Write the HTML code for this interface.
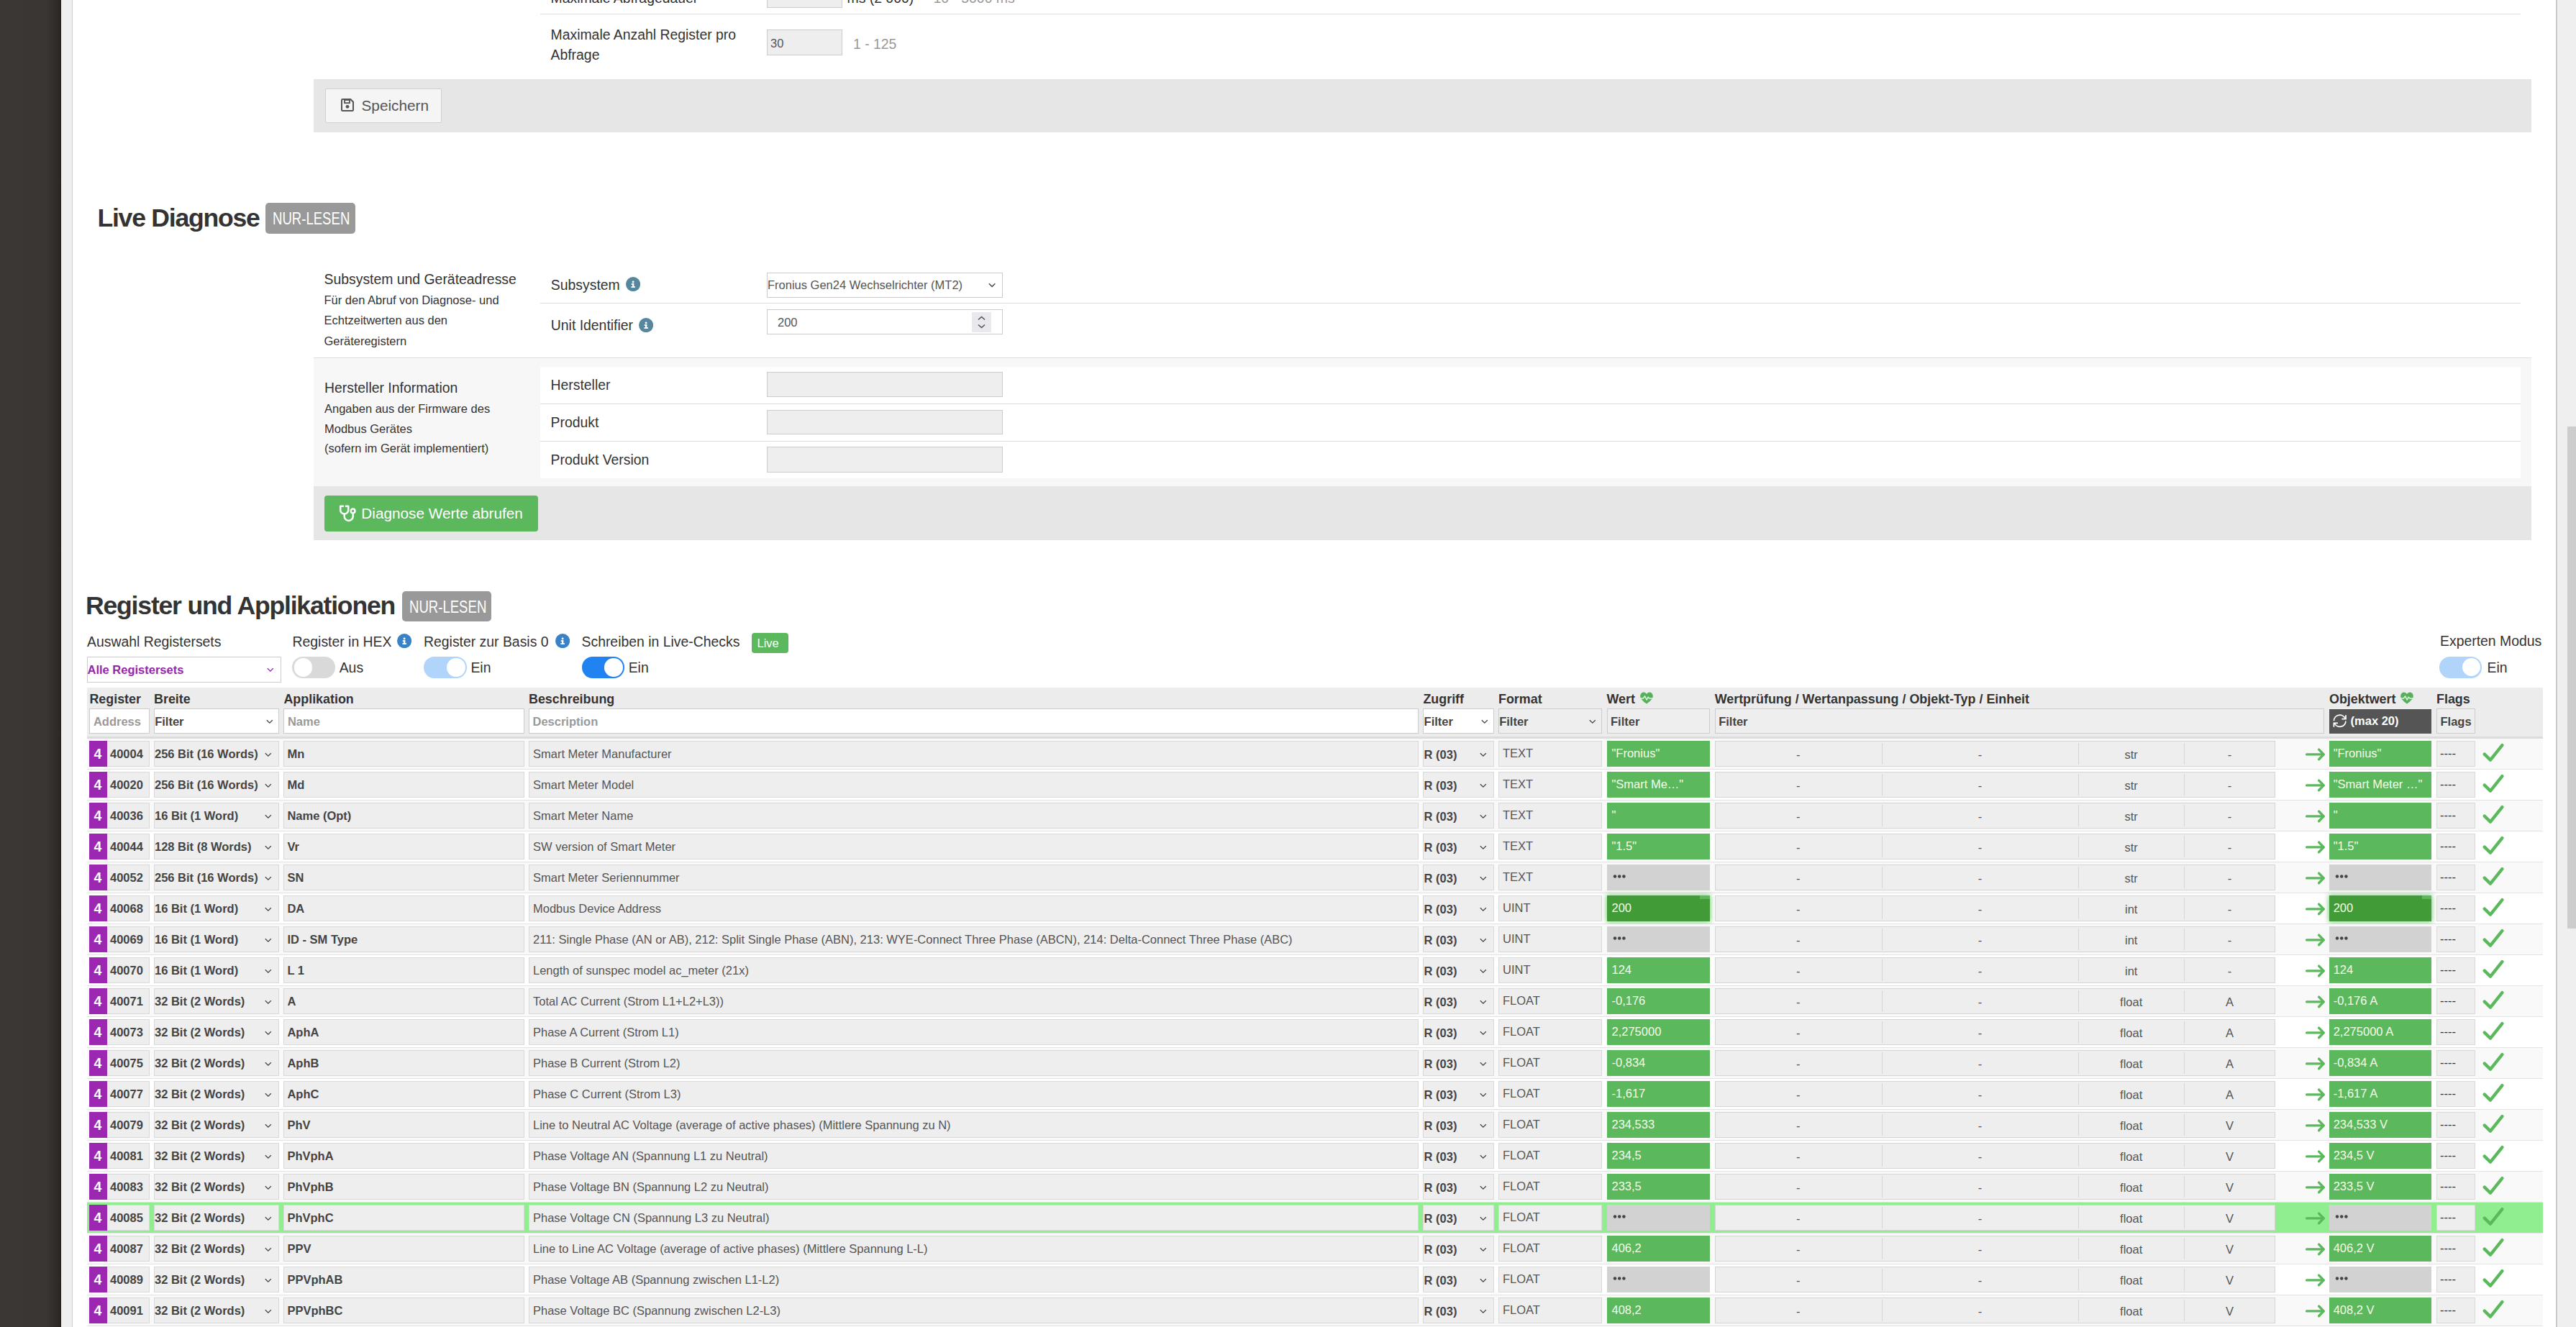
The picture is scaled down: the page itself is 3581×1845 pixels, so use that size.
<!DOCTYPE html><html><head><meta charset="utf-8"><style>html,body{margin:0;padding:0;}body{width:3581px;height:1845px;overflow:hidden;position:relative;background:#fff;font-family:"Liberation Sans",sans-serif;color:#333;}.a{position:absolute;box-sizing:border-box;}.t{white-space:nowrap;}</style></head><body>
<div class="a" style="left:0.00px;top:0.00px;width:85.00px;height:1845.00px;background:linear-gradient(to right,#3b3734 0,#3a3633 64px,#2c2825 83px,#221f1c 85px);"></div>
<div class="a" style="left:85.00px;top:0.00px;width:15.00px;height:1845.00px;background:#efefef;"></div>
<div class="a" style="left:99.50px;top:0.00px;width:1.50px;height:1845.00px;background:#cfcfcf;"></div>
<div class="a" style="left:3553.00px;top:0.00px;width:1.50px;height:1845.00px;background:#c9c9c9;"></div>
<div class="a" style="left:3554.50px;top:0.00px;width:26.50px;height:1845.00px;background:#efefef;"></div>
<div class="a" style="left:3569.00px;top:593.00px;width:12.00px;height:698.00px;background:#cdcdcd;"></div>
<div class="a t" style="left:765.50px;top:-12.42px;font-size:19.4px;line-height:19.4px;font-weight:normal;color:#333;">Maximale Abfragedauer</div>
<div class="a" style="left:1066.00px;top:-25.00px;width:105.00px;height:35.50px;background:#eee;border:1px solid #ccc;"></div>
<div class="a t" style="left:1177.50px;top:-12.42px;font-size:19.4px;line-height:19.4px;font-weight:normal;color:#333;">ms (2 000)</div>
<div class="a t" style="left:1297.50px;top:-12.42px;font-size:19.4px;line-height:19.4px;font-weight:normal;color:#999;">10 - 5000 ms</div>
<div class="a" style="left:751.00px;top:19.00px;width:2753.00px;height:1.30px;background:#ddd;"></div>
<div class="a t" style="left:765.50px;top:39.28px;font-size:19.4px;line-height:19.4px;font-weight:normal;color:#333;">Maximale Anzahl Register pro</div>
<div class="a t" style="left:765.50px;top:66.98px;font-size:19.4px;line-height:19.4px;font-weight:normal;color:#333;">Abfrage</div>
<div class="a" style="left:1066.00px;top:41.00px;width:105.00px;height:35.60px;background:#eee;border:1px solid #ccc;"></div>
<div class="a t" style="left:1071.00px;top:52.03px;font-size:16.5px;line-height:16.5px;font-weight:normal;color:#555;">30</div>
<div class="a t" style="left:1186.00px;top:52.08px;font-size:19.4px;line-height:19.4px;font-weight:normal;color:#999;">1 - 125</div>
<div class="a" style="left:436.00px;top:110.00px;width:3083.00px;height:74.00px;background:#e6e6e6;"></div>
<div class="a" style="left:451.70px;top:122.60px;width:162.70px;height:48.60px;background:#f5f5f5;border:1px solid #d0d0d0;border-radius:2px;"></div>
<svg class="a" style="left:473.80px;top:137.00px;" width="18" height="18" viewBox="0 0 18 18"><path d="M2.2 1 H13.3 L17 4.7 V15.8 Q17 17 15.8 17 H2.2 Q1 17 1 15.8 V2.2 Q1 1 2.2 1 Z" fill="none" stroke="#555" stroke-width="2"/><rect x="5" y="2" width="7" height="4.2" fill="none" stroke="#555" stroke-width="1.8"/><circle cx="9" cy="11.3" r="2.4" fill="#555"/></svg>
<div class="a t" style="left:502.50px;top:137.44px;font-size:20.75px;line-height:20.75px;font-weight:normal;color:#555;">Speichern</div>
<div class="a t" style="left:135.50px;top:286.06px;font-size:35.6px;line-height:35.6px;font-weight:bold;color:#333;letter-spacing:-1.25px;">Live Diagnose</div>
<div class="a" style="left:369.00px;top:282.00px;width:125.00px;height:42.70px;background:#999;border-radius:5px;"></div>
<div class="a t" style="left:379.00px;top:293.11px;font-size:23.5px;line-height:23.5px;font-weight:normal;color:#fff;transform:scaleX(0.79);transform-origin:0 0;">NUR-LESEN</div>
<div class="a t" style="left:450.50px;top:378.98px;font-size:19.4px;line-height:19.4px;font-weight:normal;color:#333;">Subsystem und Geräteadresse</div>
<div class="a t" style="left:450.50px;top:408.63px;font-size:16.5px;line-height:16.5px;font-weight:normal;color:#333;">Für den Abruf von Diagnose- und</div>
<div class="a t" style="left:450.50px;top:437.13px;font-size:16.5px;line-height:16.5px;font-weight:normal;color:#333;">Echtzeitwerten aus den</div>
<div class="a t" style="left:450.50px;top:465.63px;font-size:16.5px;line-height:16.5px;font-weight:normal;color:#333;">Geräteregistern</div>
<div class="a t" style="left:765.80px;top:386.58px;font-size:19.4px;line-height:19.4px;font-weight:normal;color:#333;">Subsystem</div>
<svg class="a" style="left:869.90px;top:385.20px;" width="20.2" height="20.2" viewBox="0 0 20.2 20.2"><circle cx="10.1" cy="10.1" r="10.1" fill="#55889f"/><circle cx="10.1" cy="7.0" r="1.45" fill="#fff"/><rect x="7.7" y="9.2" width="3.6" height="1.7" fill="#fff"/><rect x="9.0" y="9.2" width="2.3" height="5.6" fill="#fff"/><rect x="7.4" y="13.2" width="5.6" height="1.7" fill="#fff"/></svg>
<div class="a" style="left:1066.00px;top:378.50px;width:327.50px;height:35.00px;background:#fff;border:1px solid #ccc;"></div>
<div class="a t" style="left:1067.00px;top:388.13px;font-size:16.5px;line-height:16.5px;font-weight:normal;color:#555;">Fronius Gen24 Wechselrichter (MT2)</div>
<svg class="a" style="left:1373.90px;top:392.60px;" width="11.2" height="7.8" viewBox="0 0 11.2 7.8"><polyline points="0.85,1.275 5.1,5.525 9.35,1.275" fill="none" stroke="#444" stroke-width="1.36"/></svg>
<div class="a" style="left:751.00px;top:421.00px;width:2753.00px;height:1.30px;background:#ddd;"></div>
<div class="a t" style="left:765.80px;top:442.58px;font-size:19.4px;line-height:19.4px;font-weight:normal;color:#333;">Unit Identifier</div>
<svg class="a" style="left:888.30px;top:441.50px;" width="20.2" height="20.2" viewBox="0 0 20.2 20.2"><circle cx="10.1" cy="10.1" r="10.1" fill="#55889f"/><circle cx="10.1" cy="7.0" r="1.45" fill="#fff"/><rect x="7.7" y="9.2" width="3.6" height="1.7" fill="#fff"/><rect x="9.0" y="9.2" width="2.3" height="5.6" fill="#fff"/><rect x="7.4" y="13.2" width="5.6" height="1.7" fill="#fff"/></svg>
<div class="a" style="left:1066.00px;top:430.00px;width:327.50px;height:35.40px;background:#fff;border:1px solid #ccc;"></div>
<div class="a t" style="left:1081.00px;top:439.83px;font-size:16.5px;line-height:16.5px;font-weight:normal;color:#555;">200</div>
<div class="a" style="left:1351.00px;top:434.00px;width:27.00px;height:28.00px;background:#e9e9ed;"></div>
<svg class="a" style="left:1355.00px;top:437.00px;" width="19" height="22" viewBox="0 0 19 22"><polyline points="5,7.5 9.5,3.5 14,7.5" fill="none" stroke="#555" stroke-width="1.6"/><polyline points="5,14.5 9.5,18.5 14,14.5" fill="none" stroke="#555" stroke-width="1.6"/></svg>
<div class="a" style="left:436.00px;top:496.50px;width:3083.00px;height:1.30px;background:#ddd;"></div>
<div class="a" style="left:436.00px;top:497.80px;width:3083.00px;height:178.20px;background:#f7f7f7;"></div>
<div class="a" style="left:751.00px;top:510.00px;width:2753.00px;height:155.00px;background:#fff;"></div>
<div class="a t" style="left:451.00px;top:529.58px;font-size:19.4px;line-height:19.4px;font-weight:normal;color:#333;">Hersteller Information</div>
<div class="a t" style="left:451.00px;top:560.03px;font-size:16.5px;line-height:16.5px;font-weight:normal;color:#333;">Angaben aus der Firmware des</div>
<div class="a t" style="left:451.00px;top:587.83px;font-size:16.5px;line-height:16.5px;font-weight:normal;color:#333;">Modbus Gerätes</div>
<div class="a t" style="left:451.00px;top:615.03px;font-size:16.5px;line-height:16.5px;font-weight:normal;color:#333;">(sofern im Gerät implementiert)</div>
<div class="a t" style="left:765.50px;top:526.18px;font-size:19.4px;line-height:19.4px;font-weight:normal;color:#333;">Hersteller</div>
<div class="a t" style="left:765.50px;top:577.58px;font-size:19.4px;line-height:19.4px;font-weight:normal;color:#333;">Produkt</div>
<div class="a t" style="left:765.50px;top:629.58px;font-size:19.4px;line-height:19.4px;font-weight:normal;color:#333;">Produkt Version</div>
<div class="a" style="left:1066.00px;top:517.00px;width:327.60px;height:35.00px;background:#eee;border:1px solid #ccc;"></div>
<div class="a" style="left:1066.00px;top:569.60px;width:327.60px;height:34.90px;background:#eee;border:1px solid #ccc;"></div>
<div class="a" style="left:1066.00px;top:621.00px;width:327.60px;height:36.00px;background:#eee;border:1px solid #ccc;"></div>
<div class="a" style="left:751.00px;top:561.00px;width:2753.00px;height:1.20px;background:#ddd;"></div>
<div class="a" style="left:751.00px;top:613.00px;width:2753.00px;height:1.20px;background:#ddd;"></div>
<div class="a" style="left:436.00px;top:676.00px;width:3083.00px;height:75.00px;background:#e6e6e6;"></div>
<div class="a" style="left:451.20px;top:689.20px;width:296.60px;height:49.60px;background:#5cb85c;border-radius:4px;"></div>
<svg class="a" style="left:465.00px;top:697.00px;" width="35" height="33" viewBox="0 0 35 33"><path d="M11.9 6.7 H8.2 V12 A5.5 5.5 0 0 0 19.2 12 V6.7 H15.9" fill="none" stroke="#fff" stroke-width="2.5" stroke-linejoin="round" stroke-linecap="round"/><path d="M13.7 17.5 V21 A6 6 0 0 0 25.7 21 V16.3" fill="none" stroke="#fff" stroke-width="2.5"/><circle cx="25.6" cy="13.4" r="2.9" fill="none" stroke="#fff" stroke-width="2.4"/></svg>
<div class="a t" style="left:502.30px;top:704.44px;font-size:20.75px;line-height:20.75px;font-weight:normal;color:#fff;">Diagnose Werte abrufen</div>
<div class="a t" style="left:119.00px;top:825.36px;font-size:35.6px;line-height:35.6px;font-weight:bold;color:#333;letter-spacing:-1.2px;">Register und Applikationen</div>
<div class="a" style="left:558.60px;top:822.40px;width:124.40px;height:42.00px;background:#999;border-radius:5px;"></div>
<div class="a t" style="left:568.50px;top:833.11px;font-size:23.5px;line-height:23.5px;font-weight:normal;color:#fff;transform:scaleX(0.79);transform-origin:0 0;">NUR-LESEN</div>
<div class="a t" style="left:121.00px;top:882.58px;font-size:19.4px;line-height:19.4px;font-weight:normal;color:#333;">Auswahl Registersets</div>
<div class="a" style="left:121.00px;top:913.00px;width:269.70px;height:35.80px;background:#fff;border:1px solid #ccc;"></div>
<div class="a t" style="left:121.50px;top:923.03px;font-size:16.5px;line-height:16.5px;font-weight:bold;color:#9327ad;">Alle Registersets</div>
<svg class="a" style="left:371.20px;top:927.80px;" width="10.600000000000001" height="7.4" viewBox="0 0 10.600000000000001 7.4"><polyline points="0.8,1.2000000000000002 4.800000000000001,5.2 8.8,1.2000000000000002" fill="none" stroke="#9327ad" stroke-width="1.2800000000000002"/></svg>
<div class="a t" style="left:406.50px;top:882.58px;font-size:19.4px;line-height:19.4px;font-weight:normal;color:#333;">Register in HEX</div>
<svg class="a" style="left:552.10px;top:881.30px;" width="20.2" height="20.2" viewBox="0 0 20.2 20.2"><circle cx="10.1" cy="10.1" r="10.1" fill="#3a82c8"/><circle cx="10.1" cy="7.0" r="1.45" fill="#fff"/><rect x="7.7" y="9.2" width="3.6" height="1.7" fill="#fff"/><rect x="9.0" y="9.2" width="2.3" height="5.6" fill="#fff"/><rect x="7.4" y="13.2" width="5.6" height="1.7" fill="#fff"/></svg>
<div class="a" style="left:406.30px;top:913.00px;width:59.50px;height:29.80px;background:#d9d9d9;border-radius:14.899999999999977px;"></div>
<div class="a" style="left:408.50px;top:915.20px;width:25.40px;height:25.40px;background:#fff;border-radius:50%;"></div>
<div class="a t" style="left:471.70px;top:918.98px;font-size:19.4px;line-height:19.4px;font-weight:normal;color:#333;">Aus</div>
<div class="a t" style="left:589.00px;top:882.58px;font-size:19.4px;line-height:19.4px;font-weight:normal;color:#333;">Register zur Basis 0</div>
<svg class="a" style="left:771.50px;top:881.30px;" width="20.2" height="20.2" viewBox="0 0 20.2 20.2"><circle cx="10.1" cy="10.1" r="10.1" fill="#3a82c8"/><circle cx="10.1" cy="7.0" r="1.45" fill="#fff"/><rect x="7.7" y="9.2" width="3.6" height="1.7" fill="#fff"/><rect x="9.0" y="9.2" width="2.3" height="5.6" fill="#fff"/><rect x="7.4" y="13.2" width="5.6" height="1.7" fill="#fff"/></svg>
<div class="a" style="left:589.10px;top:913.00px;width:59.80px;height:29.80px;background:#b1d4fb;border-radius:14.899999999999977px;"></div>
<div class="a" style="left:621.30px;top:915.20px;width:25.40px;height:25.40px;background:#fff;border-radius:50%;"></div>
<div class="a t" style="left:654.40px;top:918.98px;font-size:19.4px;line-height:19.4px;font-weight:normal;color:#333;">Ein</div>
<div class="a t" style="left:808.50px;top:882.58px;font-size:19.4px;line-height:19.4px;font-weight:normal;color:#333;">Schreiben in Live-Checks</div>
<div class="a" style="left:1045.00px;top:880.00px;width:51.00px;height:28.00px;background:#5cb85c;border-radius:4px;"></div>
<div class="a t" style="left:1052.50px;top:886.03px;font-size:16.5px;line-height:16.5px;font-weight:normal;color:#fff;">Live</div>
<div class="a" style="left:808.50px;top:913.00px;width:59.50px;height:29.80px;background:#2183f2;border-radius:14.899999999999977px;"></div>
<div class="a" style="left:840.40px;top:915.20px;width:25.40px;height:25.40px;background:#fff;border-radius:50%;"></div>
<div class="a t" style="left:873.70px;top:918.98px;font-size:19.4px;line-height:19.4px;font-weight:normal;color:#333;">Ein</div>
<div class="a t" style="left:3392.00px;top:882.48px;font-size:19.4px;line-height:19.4px;font-weight:normal;color:#333;">Experten Modus</div>
<div class="a" style="left:3391.00px;top:913.00px;width:59.30px;height:29.60px;background:#b1d4fb;border-radius:14.800000000000011px;"></div>
<div class="a" style="left:3422.90px;top:915.20px;width:25.20px;height:25.20px;background:#fff;border-radius:50%;"></div>
<div class="a t" style="left:3457.50px;top:918.98px;font-size:19.4px;line-height:19.4px;font-weight:normal;color:#333;">Ein</div>
<div class="a" style="left:121.40px;top:956.00px;width:3413.60px;height:68.00px;background:#ececec;"></div>
<div class="a" style="left:121.40px;top:1024.00px;width:3413.60px;height:2.60px;background:#dcdcdc;"></div>
<div class="a t" style="left:124.40px;top:963.75px;font-size:17.9px;line-height:17.9px;font-weight:bold;color:#333;">Register</div>
<div class="a t" style="left:214.00px;top:963.75px;font-size:17.9px;line-height:17.9px;font-weight:bold;color:#333;">Breite</div>
<div class="a t" style="left:394.40px;top:963.75px;font-size:17.9px;line-height:17.9px;font-weight:bold;color:#333;">Applikation</div>
<div class="a t" style="left:735.00px;top:963.75px;font-size:17.9px;line-height:17.9px;font-weight:bold;color:#333;">Beschreibung</div>
<div class="a t" style="left:1978.40px;top:963.75px;font-size:17.9px;line-height:17.9px;font-weight:bold;color:#333;">Zugriff</div>
<div class="a t" style="left:2083.00px;top:963.75px;font-size:17.9px;line-height:17.9px;font-weight:bold;color:#333;">Format</div>
<div class="a t" style="left:2233.50px;top:963.75px;font-size:17.9px;line-height:17.9px;font-weight:bold;color:#333;">Wert</div>
<div class="a t" style="left:2383.70px;top:963.75px;font-size:17.9px;line-height:17.9px;font-weight:bold;color:#333;">Wertprüfung / Wertanpassung / Objekt-Typ / Einheit</div>
<div class="a t" style="left:3238.00px;top:963.75px;font-size:17.9px;line-height:17.9px;font-weight:bold;color:#333;">Objektwert</div>
<div class="a t" style="left:3387.00px;top:963.75px;font-size:17.9px;line-height:17.9px;font-weight:bold;color:#333;">Flags</div>
<svg class="a" style="left:2279.00px;top:962.40px;" width="20" height="17.5" viewBox="0 0 20 17.5"><g transform="translate(1,0.5)"><path d="M9 15.9 C8.2 15.9 1.8 10.5 0.7 8 C-0.9 4.4 1.4 0.1 4.8 0.1 C6.6 0.1 8.1 1.1 9 2.4 C9.9 1.1 11.4 0.1 13.2 0.1 C16.6 0.1 18.9 4.4 17.3 8 C16.2 10.5 9.8 15.9 9 15.9 Z" fill="#58b05c"/><polyline points="-0.6,8.4 4.5,8.4 6.5,5.3 9.2,10.6 11.2,6.7 12.9,8.6 18.6,8.6" fill="none" stroke="#d8f6d8" stroke-width="1.5" stroke-linejoin="round"/></g></svg>
<svg class="a" style="left:3336.10px;top:962.40px;" width="20" height="17.5" viewBox="0 0 20 17.5"><g transform="translate(1,0.5)"><path d="M9 15.9 C8.2 15.9 1.8 10.5 0.7 8 C-0.9 4.4 1.4 0.1 4.8 0.1 C6.6 0.1 8.1 1.1 9 2.4 C9.9 1.1 11.4 0.1 13.2 0.1 C16.6 0.1 18.9 4.4 17.3 8 C16.2 10.5 9.8 15.9 9 15.9 Z" fill="#58b05c"/><polyline points="-0.6,8.4 4.5,8.4 6.5,5.3 9.2,10.6 11.2,6.7 12.9,8.6 18.6,8.6" fill="none" stroke="#d8f6d8" stroke-width="1.5" stroke-linejoin="round"/></g></svg>
<div class="a" style="left:124.40px;top:985.30px;width:83.30px;height:35.20px;background:#fff;border:1px solid #ccc;"></div>
<div class="a t" style="left:129.90px;top:994.73px;font-size:16.5px;line-height:16.5px;font-weight:bold;color:#999;">Address</div>
<div class="a" style="left:214.00px;top:985.30px;width:173.60px;height:35.20px;background:#fff;border:1px solid #ccc;"></div>
<div class="a t" style="left:215.20px;top:994.73px;font-size:16.5px;line-height:16.5px;font-weight:bold;color:#444;">Filter</div>
<svg class="a" style="left:369.80px;top:1000.20px;" width="10.600000000000001" height="7.4" viewBox="0 0 10.600000000000001 7.4"><polyline points="0.8,1.2000000000000002 4.800000000000001,5.2 8.8,1.2000000000000002" fill="none" stroke="#444" stroke-width="1.2800000000000002"/></svg>
<div class="a" style="left:394.40px;top:985.30px;width:334.30px;height:35.20px;background:#fff;border:1px solid #ccc;"></div>
<div class="a t" style="left:399.90px;top:994.73px;font-size:16.5px;line-height:16.5px;font-weight:bold;color:#999;">Name</div>
<div class="a" style="left:735.00px;top:985.30px;width:1236.50px;height:35.20px;background:#fff;border:1px solid #ccc;"></div>
<div class="a t" style="left:740.50px;top:994.73px;font-size:16.5px;line-height:16.5px;font-weight:bold;color:#999;">Description</div>
<div class="a" style="left:1978.40px;top:985.30px;width:98.20px;height:35.20px;background:#fff;border:1px solid #ccc;"></div>
<div class="a t" style="left:1979.60px;top:994.73px;font-size:16.5px;line-height:16.5px;font-weight:bold;color:#444;">Filter</div>
<svg class="a" style="left:2058.80px;top:1000.20px;" width="10.600000000000001" height="7.4" viewBox="0 0 10.600000000000001 7.4"><polyline points="0.8,1.2000000000000002 4.800000000000001,5.2 8.8,1.2000000000000002" fill="none" stroke="#444" stroke-width="1.2800000000000002"/></svg>
<div class="a" style="left:2083.00px;top:985.30px;width:143.60px;height:35.20px;background:#eee;border:1px solid #ccc;"></div>
<div class="a t" style="left:2084.20px;top:994.73px;font-size:16.5px;line-height:16.5px;font-weight:bold;color:#444;">Filter</div>
<svg class="a" style="left:2208.80px;top:1000.20px;" width="10.600000000000001" height="7.4" viewBox="0 0 10.600000000000001 7.4"><polyline points="0.8,1.2000000000000002 4.800000000000001,5.2 8.8,1.2000000000000002" fill="none" stroke="#444" stroke-width="1.2800000000000002"/></svg>
<div class="a" style="left:2233.50px;top:985.30px;width:143.00px;height:35.20px;background:#eee;border:1px solid #ccc;"></div>
<div class="a t" style="left:2239.00px;top:994.73px;font-size:16.5px;line-height:16.5px;font-weight:bold;color:#444;">Filter</div>
<div class="a" style="left:2383.70px;top:985.30px;width:847.30px;height:35.20px;background:#eee;border:1px solid #ccc;"></div>
<div class="a t" style="left:2389.20px;top:994.73px;font-size:16.5px;line-height:16.5px;font-weight:bold;color:#444;">Filter</div>
<div class="a" style="left:3238.00px;top:986.00px;width:142.00px;height:33.80px;background:#555;"></div>
<svg class="a" style="left:3238.00px;top:988.50px;" width="30" height="30" viewBox="0 0 30 30"><path d="M6.4 13.3 A8.3 8.3 0 0 1 22.3 10.2" fill="none" stroke="#fff" stroke-width="1.75"/><path d="M23 5.2 V10.6 H17.4" fill="none" stroke="#fff" stroke-width="1.75"/><path d="M23 13.6 A8.3 8.3 0 0 1 7.2 16.6" fill="none" stroke="#fff" stroke-width="1.75"/><path d="M6.4 21.8 V16.4 H12" fill="none" stroke="#fff" stroke-width="1.75"/></svg>
<div class="a t" style="left:3267.60px;top:993.83px;font-size:16.5px;line-height:16.5px;font-weight:bold;color:#fff;">(max 20)</div>
<div class="a" style="left:3387.00px;top:985.30px;width:53.60px;height:35.20px;background:#eee;border:1px solid #ccc;"></div>
<div class="a t" style="left:3392.50px;top:994.73px;font-size:16.5px;line-height:16.5px;font-weight:bold;color:#444;">Flags</div>
<div class="a" style="left:121.40px;top:1026.60px;width:3413.60px;height:42.00px;background:#f9f9f9;"></div>
<div class="a" style="left:121.40px;top:1068.60px;width:3413.60px;height:1.00px;background:#e3e3e3;"></div>
<div class="a" style="left:124.40px;top:1030.20px;width:83.30px;height:35.60px;background:#eee;border:1px solid #d9d9d9;"></div>
<div class="a" style="left:214.00px;top:1030.20px;width:173.60px;height:35.60px;background:#eee;border:1px solid #d9d9d9;"></div>
<div class="a" style="left:394.40px;top:1030.20px;width:334.30px;height:35.60px;background:#eee;border:1px solid #d9d9d9;"></div>
<div class="a" style="left:735.00px;top:1030.20px;width:1236.50px;height:35.60px;background:#eee;border:1px solid #d9d9d9;"></div>
<div class="a" style="left:1978.40px;top:1030.20px;width:98.20px;height:35.60px;background:#eee;border:1px solid #d9d9d9;"></div>
<div class="a" style="left:2083.00px;top:1030.20px;width:143.60px;height:35.60px;background:#eee;border:1px solid #d9d9d9;"></div>
<div class="a" style="left:124.40px;top:1030.20px;width:24.20px;height:35.60px;background:#9c27b0;"></div>
<div class="a t" style="left:130.40px;top:1038.68px;font-size:19.4px;line-height:19.4px;font-weight:bold;color:#fff;">4</div>
<div class="a t" style="left:153.00px;top:1040.13px;font-size:16.5px;line-height:16.5px;font-weight:bold;color:#444;">40004</div>
<div class="a t" style="left:215.00px;top:1040.13px;font-size:16.5px;line-height:16.5px;font-weight:bold;color:#444;">256 Bit (16 Words)</div>
<svg class="a" style="left:368.20px;top:1045.50px;" width="10.600000000000001" height="7.4" viewBox="0 0 10.600000000000001 7.4"><polyline points="0.8,1.2000000000000002 4.800000000000001,5.2 8.8,1.2000000000000002" fill="none" stroke="#444" stroke-width="1.2800000000000002"/></svg>
<div class="a t" style="left:399.40px;top:1040.13px;font-size:16.5px;line-height:16.5px;font-weight:bold;color:#444;">Mn</div>
<div class="a t" style="left:741.00px;top:1040.13px;font-size:16.5px;line-height:16.5px;font-weight:normal;color:#555;">Smart Meter Manufacturer</div>
<div class="a t" style="left:1979.60px;top:1041.13px;font-size:16.5px;line-height:16.5px;font-weight:bold;color:#444;">R (03)</div>
<svg class="a" style="left:2057.20px;top:1045.50px;" width="10.600000000000001" height="7.4" viewBox="0 0 10.600000000000001 7.4"><polyline points="0.8,1.2000000000000002 4.800000000000001,5.2 8.8,1.2000000000000002" fill="none" stroke="#444" stroke-width="1.2800000000000002"/></svg>
<div class="a t" style="left:2089.00px;top:1038.63px;font-size:16.5px;line-height:16.5px;font-weight:normal;color:#555;">TEXT</div>
<div class="a" style="left:2233.50px;top:1030.20px;width:143.00px;height:35.60px;background:#5cb85c;"></div>
<div class="a t" style="left:2240.50px;top:1039.13px;font-size:16.5px;line-height:16.5px;font-weight:normal;color:#f4fbe9;">&quot;Fronius&quot;</div>
<div class="a" style="left:2383.70px;top:1030.20px;width:778.90px;height:35.60px;background:#eee;border:1px solid #d4d4d4;"></div>
<div class="a" style="left:2616.00px;top:1033.20px;width:1.00px;height:29.60px;background:#d6d6d6;"></div>
<div class="a" style="left:2889.30px;top:1033.20px;width:1.00px;height:29.60px;background:#d6d6d6;"></div>
<div class="a" style="left:3036.20px;top:1033.20px;width:1.00px;height:29.60px;background:#d6d6d6;"></div>
<div class="a t" style="left:2439.80px;width:120px;text-align:center;top:1040.83px;font-size:16.5px;line-height:16.5px;color:#555;">-</div>
<div class="a t" style="left:2692.60px;width:120px;text-align:center;top:1040.83px;font-size:16.5px;line-height:16.5px;color:#555;">-</div>
<div class="a t" style="left:2902.70px;width:120px;text-align:center;top:1040.83px;font-size:16.5px;line-height:16.5px;color:#555;">str</div>
<div class="a t" style="left:3039.40px;width:120px;text-align:center;top:1040.83px;font-size:16.5px;line-height:16.5px;color:#555;">-</div>
<svg class="a" style="left:3203.00px;top:1039.20px;" width="34" height="20" viewBox="0 0 34 20"><line x1="3.6" y1="9.9" x2="27" y2="9.9" stroke="#5cb85c" stroke-width="3.4" stroke-linecap="round"/><polyline points="20.6,3.1 27.2,9.9 20.6,16.7" fill="none" stroke="#5cb85c" stroke-width="3.4" stroke-linecap="round" stroke-linejoin="round"/></svg>
<div class="a" style="left:3238.00px;top:1030.20px;width:142.00px;height:35.60px;background:#5cb85c;"></div>
<div class="a t" style="left:3243.70px;top:1039.13px;font-size:16.5px;line-height:16.5px;font-weight:normal;color:#f4fbe9;">&quot;Fronius&quot;</div>
<div class="a" style="left:3387.00px;top:1030.20px;width:53.60px;height:35.60px;background:#eee;border:1px solid #d9d9d9;"></div>
<div class="a t" style="left:3392.00px;top:1038.63px;font-size:16.5px;line-height:16.5px;font-weight:normal;color:#333;">----</div>
<svg class="a" style="left:3451.00px;top:1030.20px;" width="32" height="32" viewBox="0 0 32 32"><polyline points="2.8,18.6 11.0,26.6 27.4,6.2" fill="none" stroke="#5cb85c" stroke-width="4.4" stroke-linecap="round" stroke-linejoin="round"/></svg>
<div class="a" style="left:121.40px;top:1111.60px;width:3413.60px;height:1.00px;background:#e3e3e3;"></div>
<div class="a" style="left:124.40px;top:1073.20px;width:83.30px;height:35.60px;background:#eee;border:1px solid #d9d9d9;"></div>
<div class="a" style="left:214.00px;top:1073.20px;width:173.60px;height:35.60px;background:#eee;border:1px solid #d9d9d9;"></div>
<div class="a" style="left:394.40px;top:1073.20px;width:334.30px;height:35.60px;background:#eee;border:1px solid #d9d9d9;"></div>
<div class="a" style="left:735.00px;top:1073.20px;width:1236.50px;height:35.60px;background:#eee;border:1px solid #d9d9d9;"></div>
<div class="a" style="left:1978.40px;top:1073.20px;width:98.20px;height:35.60px;background:#eee;border:1px solid #d9d9d9;"></div>
<div class="a" style="left:2083.00px;top:1073.20px;width:143.60px;height:35.60px;background:#eee;border:1px solid #d9d9d9;"></div>
<div class="a" style="left:124.40px;top:1073.20px;width:24.20px;height:35.60px;background:#9c27b0;"></div>
<div class="a t" style="left:130.40px;top:1081.68px;font-size:19.4px;line-height:19.4px;font-weight:bold;color:#fff;">4</div>
<div class="a t" style="left:153.00px;top:1083.13px;font-size:16.5px;line-height:16.5px;font-weight:bold;color:#444;">40020</div>
<div class="a t" style="left:215.00px;top:1083.13px;font-size:16.5px;line-height:16.5px;font-weight:bold;color:#444;">256 Bit (16 Words)</div>
<svg class="a" style="left:368.20px;top:1088.50px;" width="10.600000000000001" height="7.4" viewBox="0 0 10.600000000000001 7.4"><polyline points="0.8,1.2000000000000002 4.800000000000001,5.2 8.8,1.2000000000000002" fill="none" stroke="#444" stroke-width="1.2800000000000002"/></svg>
<div class="a t" style="left:399.40px;top:1083.13px;font-size:16.5px;line-height:16.5px;font-weight:bold;color:#444;">Md</div>
<div class="a t" style="left:741.00px;top:1083.13px;font-size:16.5px;line-height:16.5px;font-weight:normal;color:#555;">Smart Meter Model</div>
<div class="a t" style="left:1979.60px;top:1084.13px;font-size:16.5px;line-height:16.5px;font-weight:bold;color:#444;">R (03)</div>
<svg class="a" style="left:2057.20px;top:1088.50px;" width="10.600000000000001" height="7.4" viewBox="0 0 10.600000000000001 7.4"><polyline points="0.8,1.2000000000000002 4.800000000000001,5.2 8.8,1.2000000000000002" fill="none" stroke="#444" stroke-width="1.2800000000000002"/></svg>
<div class="a t" style="left:2089.00px;top:1081.63px;font-size:16.5px;line-height:16.5px;font-weight:normal;color:#555;">TEXT</div>
<div class="a" style="left:2233.50px;top:1073.20px;width:143.00px;height:35.60px;background:#5cb85c;"></div>
<div class="a t" style="left:2240.50px;top:1082.13px;font-size:16.5px;line-height:16.5px;font-weight:normal;color:#f4fbe9;">&quot;Smart Me…&quot;</div>
<div class="a" style="left:2383.70px;top:1073.20px;width:778.90px;height:35.60px;background:#eee;border:1px solid #d4d4d4;"></div>
<div class="a" style="left:2616.00px;top:1076.20px;width:1.00px;height:29.60px;background:#d6d6d6;"></div>
<div class="a" style="left:2889.30px;top:1076.20px;width:1.00px;height:29.60px;background:#d6d6d6;"></div>
<div class="a" style="left:3036.20px;top:1076.20px;width:1.00px;height:29.60px;background:#d6d6d6;"></div>
<div class="a t" style="left:2439.80px;width:120px;text-align:center;top:1083.83px;font-size:16.5px;line-height:16.5px;color:#555;">-</div>
<div class="a t" style="left:2692.60px;width:120px;text-align:center;top:1083.83px;font-size:16.5px;line-height:16.5px;color:#555;">-</div>
<div class="a t" style="left:2902.70px;width:120px;text-align:center;top:1083.83px;font-size:16.5px;line-height:16.5px;color:#555;">str</div>
<div class="a t" style="left:3039.40px;width:120px;text-align:center;top:1083.83px;font-size:16.5px;line-height:16.5px;color:#555;">-</div>
<svg class="a" style="left:3203.00px;top:1082.20px;" width="34" height="20" viewBox="0 0 34 20"><line x1="3.6" y1="9.9" x2="27" y2="9.9" stroke="#5cb85c" stroke-width="3.4" stroke-linecap="round"/><polyline points="20.6,3.1 27.2,9.9 20.6,16.7" fill="none" stroke="#5cb85c" stroke-width="3.4" stroke-linecap="round" stroke-linejoin="round"/></svg>
<div class="a" style="left:3238.00px;top:1073.20px;width:142.00px;height:35.60px;background:#5cb85c;"></div>
<div class="a t" style="left:3243.70px;top:1082.13px;font-size:16.5px;line-height:16.5px;font-weight:normal;color:#f4fbe9;">&quot;Smart Meter …&quot;</div>
<div class="a" style="left:3387.00px;top:1073.20px;width:53.60px;height:35.60px;background:#eee;border:1px solid #d9d9d9;"></div>
<div class="a t" style="left:3392.00px;top:1081.63px;font-size:16.5px;line-height:16.5px;font-weight:normal;color:#333;">----</div>
<svg class="a" style="left:3451.00px;top:1073.20px;" width="32" height="32" viewBox="0 0 32 32"><polyline points="2.8,18.6 11.0,26.6 27.4,6.2" fill="none" stroke="#5cb85c" stroke-width="4.4" stroke-linecap="round" stroke-linejoin="round"/></svg>
<div class="a" style="left:121.40px;top:1112.60px;width:3413.60px;height:42.00px;background:#f9f9f9;"></div>
<div class="a" style="left:121.40px;top:1154.60px;width:3413.60px;height:1.00px;background:#e3e3e3;"></div>
<div class="a" style="left:124.40px;top:1116.20px;width:83.30px;height:35.60px;background:#eee;border:1px solid #d9d9d9;"></div>
<div class="a" style="left:214.00px;top:1116.20px;width:173.60px;height:35.60px;background:#eee;border:1px solid #d9d9d9;"></div>
<div class="a" style="left:394.40px;top:1116.20px;width:334.30px;height:35.60px;background:#eee;border:1px solid #d9d9d9;"></div>
<div class="a" style="left:735.00px;top:1116.20px;width:1236.50px;height:35.60px;background:#eee;border:1px solid #d9d9d9;"></div>
<div class="a" style="left:1978.40px;top:1116.20px;width:98.20px;height:35.60px;background:#eee;border:1px solid #d9d9d9;"></div>
<div class="a" style="left:2083.00px;top:1116.20px;width:143.60px;height:35.60px;background:#eee;border:1px solid #d9d9d9;"></div>
<div class="a" style="left:124.40px;top:1116.20px;width:24.20px;height:35.60px;background:#9c27b0;"></div>
<div class="a t" style="left:130.40px;top:1124.68px;font-size:19.4px;line-height:19.4px;font-weight:bold;color:#fff;">4</div>
<div class="a t" style="left:153.00px;top:1126.13px;font-size:16.5px;line-height:16.5px;font-weight:bold;color:#444;">40036</div>
<div class="a t" style="left:215.00px;top:1126.13px;font-size:16.5px;line-height:16.5px;font-weight:bold;color:#444;">16 Bit (1 Word)</div>
<svg class="a" style="left:368.20px;top:1131.50px;" width="10.600000000000001" height="7.4" viewBox="0 0 10.600000000000001 7.4"><polyline points="0.8,1.2000000000000002 4.800000000000001,5.2 8.8,1.2000000000000002" fill="none" stroke="#444" stroke-width="1.2800000000000002"/></svg>
<div class="a t" style="left:399.40px;top:1126.13px;font-size:16.5px;line-height:16.5px;font-weight:bold;color:#444;">Name (Opt)</div>
<div class="a t" style="left:741.00px;top:1126.13px;font-size:16.5px;line-height:16.5px;font-weight:normal;color:#555;">Smart Meter Name</div>
<div class="a t" style="left:1979.60px;top:1127.13px;font-size:16.5px;line-height:16.5px;font-weight:bold;color:#444;">R (03)</div>
<svg class="a" style="left:2057.20px;top:1131.50px;" width="10.600000000000001" height="7.4" viewBox="0 0 10.600000000000001 7.4"><polyline points="0.8,1.2000000000000002 4.800000000000001,5.2 8.8,1.2000000000000002" fill="none" stroke="#444" stroke-width="1.2800000000000002"/></svg>
<div class="a t" style="left:2089.00px;top:1124.63px;font-size:16.5px;line-height:16.5px;font-weight:normal;color:#555;">TEXT</div>
<div class="a" style="left:2233.50px;top:1116.20px;width:143.00px;height:35.60px;background:#5cb85c;"></div>
<div class="a t" style="left:2240.50px;top:1125.13px;font-size:16.5px;line-height:16.5px;font-weight:normal;color:#f4fbe9;">&quot;</div>
<div class="a" style="left:2383.70px;top:1116.20px;width:778.90px;height:35.60px;background:#eee;border:1px solid #d4d4d4;"></div>
<div class="a" style="left:2616.00px;top:1119.20px;width:1.00px;height:29.60px;background:#d6d6d6;"></div>
<div class="a" style="left:2889.30px;top:1119.20px;width:1.00px;height:29.60px;background:#d6d6d6;"></div>
<div class="a" style="left:3036.20px;top:1119.20px;width:1.00px;height:29.60px;background:#d6d6d6;"></div>
<div class="a t" style="left:2439.80px;width:120px;text-align:center;top:1126.83px;font-size:16.5px;line-height:16.5px;color:#555;">-</div>
<div class="a t" style="left:2692.60px;width:120px;text-align:center;top:1126.83px;font-size:16.5px;line-height:16.5px;color:#555;">-</div>
<div class="a t" style="left:2902.70px;width:120px;text-align:center;top:1126.83px;font-size:16.5px;line-height:16.5px;color:#555;">str</div>
<div class="a t" style="left:3039.40px;width:120px;text-align:center;top:1126.83px;font-size:16.5px;line-height:16.5px;color:#555;">-</div>
<svg class="a" style="left:3203.00px;top:1125.20px;" width="34" height="20" viewBox="0 0 34 20"><line x1="3.6" y1="9.9" x2="27" y2="9.9" stroke="#5cb85c" stroke-width="3.4" stroke-linecap="round"/><polyline points="20.6,3.1 27.2,9.9 20.6,16.7" fill="none" stroke="#5cb85c" stroke-width="3.4" stroke-linecap="round" stroke-linejoin="round"/></svg>
<div class="a" style="left:3238.00px;top:1116.20px;width:142.00px;height:35.60px;background:#5cb85c;"></div>
<div class="a t" style="left:3243.70px;top:1125.13px;font-size:16.5px;line-height:16.5px;font-weight:normal;color:#f4fbe9;">&quot;</div>
<div class="a" style="left:3387.00px;top:1116.20px;width:53.60px;height:35.60px;background:#eee;border:1px solid #d9d9d9;"></div>
<div class="a t" style="left:3392.00px;top:1124.63px;font-size:16.5px;line-height:16.5px;font-weight:normal;color:#333;">----</div>
<svg class="a" style="left:3451.00px;top:1116.20px;" width="32" height="32" viewBox="0 0 32 32"><polyline points="2.8,18.6 11.0,26.6 27.4,6.2" fill="none" stroke="#5cb85c" stroke-width="4.4" stroke-linecap="round" stroke-linejoin="round"/></svg>
<div class="a" style="left:121.40px;top:1197.60px;width:3413.60px;height:1.00px;background:#e3e3e3;"></div>
<div class="a" style="left:124.40px;top:1159.20px;width:83.30px;height:35.60px;background:#eee;border:1px solid #d9d9d9;"></div>
<div class="a" style="left:214.00px;top:1159.20px;width:173.60px;height:35.60px;background:#eee;border:1px solid #d9d9d9;"></div>
<div class="a" style="left:394.40px;top:1159.20px;width:334.30px;height:35.60px;background:#eee;border:1px solid #d9d9d9;"></div>
<div class="a" style="left:735.00px;top:1159.20px;width:1236.50px;height:35.60px;background:#eee;border:1px solid #d9d9d9;"></div>
<div class="a" style="left:1978.40px;top:1159.20px;width:98.20px;height:35.60px;background:#eee;border:1px solid #d9d9d9;"></div>
<div class="a" style="left:2083.00px;top:1159.20px;width:143.60px;height:35.60px;background:#eee;border:1px solid #d9d9d9;"></div>
<div class="a" style="left:124.40px;top:1159.20px;width:24.20px;height:35.60px;background:#9c27b0;"></div>
<div class="a t" style="left:130.40px;top:1167.68px;font-size:19.4px;line-height:19.4px;font-weight:bold;color:#fff;">4</div>
<div class="a t" style="left:153.00px;top:1169.13px;font-size:16.5px;line-height:16.5px;font-weight:bold;color:#444;">40044</div>
<div class="a t" style="left:215.00px;top:1169.13px;font-size:16.5px;line-height:16.5px;font-weight:bold;color:#444;">128 Bit (8 Words)</div>
<svg class="a" style="left:368.20px;top:1174.50px;" width="10.600000000000001" height="7.4" viewBox="0 0 10.600000000000001 7.4"><polyline points="0.8,1.2000000000000002 4.800000000000001,5.2 8.8,1.2000000000000002" fill="none" stroke="#444" stroke-width="1.2800000000000002"/></svg>
<div class="a t" style="left:399.40px;top:1169.13px;font-size:16.5px;line-height:16.5px;font-weight:bold;color:#444;">Vr</div>
<div class="a t" style="left:741.00px;top:1169.13px;font-size:16.5px;line-height:16.5px;font-weight:normal;color:#555;">SW version of Smart Meter</div>
<div class="a t" style="left:1979.60px;top:1170.13px;font-size:16.5px;line-height:16.5px;font-weight:bold;color:#444;">R (03)</div>
<svg class="a" style="left:2057.20px;top:1174.50px;" width="10.600000000000001" height="7.4" viewBox="0 0 10.600000000000001 7.4"><polyline points="0.8,1.2000000000000002 4.800000000000001,5.2 8.8,1.2000000000000002" fill="none" stroke="#444" stroke-width="1.2800000000000002"/></svg>
<div class="a t" style="left:2089.00px;top:1167.63px;font-size:16.5px;line-height:16.5px;font-weight:normal;color:#555;">TEXT</div>
<div class="a" style="left:2233.50px;top:1159.20px;width:143.00px;height:35.60px;background:#5cb85c;"></div>
<div class="a t" style="left:2240.50px;top:1168.13px;font-size:16.5px;line-height:16.5px;font-weight:normal;color:#f4fbe9;">&quot;1.5&quot;</div>
<div class="a" style="left:2383.70px;top:1159.20px;width:778.90px;height:35.60px;background:#eee;border:1px solid #d4d4d4;"></div>
<div class="a" style="left:2616.00px;top:1162.20px;width:1.00px;height:29.60px;background:#d6d6d6;"></div>
<div class="a" style="left:2889.30px;top:1162.20px;width:1.00px;height:29.60px;background:#d6d6d6;"></div>
<div class="a" style="left:3036.20px;top:1162.20px;width:1.00px;height:29.60px;background:#d6d6d6;"></div>
<div class="a t" style="left:2439.80px;width:120px;text-align:center;top:1169.83px;font-size:16.5px;line-height:16.5px;color:#555;">-</div>
<div class="a t" style="left:2692.60px;width:120px;text-align:center;top:1169.83px;font-size:16.5px;line-height:16.5px;color:#555;">-</div>
<div class="a t" style="left:2902.70px;width:120px;text-align:center;top:1169.83px;font-size:16.5px;line-height:16.5px;color:#555;">str</div>
<div class="a t" style="left:3039.40px;width:120px;text-align:center;top:1169.83px;font-size:16.5px;line-height:16.5px;color:#555;">-</div>
<svg class="a" style="left:3203.00px;top:1168.20px;" width="34" height="20" viewBox="0 0 34 20"><line x1="3.6" y1="9.9" x2="27" y2="9.9" stroke="#5cb85c" stroke-width="3.4" stroke-linecap="round"/><polyline points="20.6,3.1 27.2,9.9 20.6,16.7" fill="none" stroke="#5cb85c" stroke-width="3.4" stroke-linecap="round" stroke-linejoin="round"/></svg>
<div class="a" style="left:3238.00px;top:1159.20px;width:142.00px;height:35.60px;background:#5cb85c;"></div>
<div class="a t" style="left:3243.70px;top:1168.13px;font-size:16.5px;line-height:16.5px;font-weight:normal;color:#f4fbe9;">&quot;1.5&quot;</div>
<div class="a" style="left:3387.00px;top:1159.20px;width:53.60px;height:35.60px;background:#eee;border:1px solid #d9d9d9;"></div>
<div class="a t" style="left:3392.00px;top:1167.63px;font-size:16.5px;line-height:16.5px;font-weight:normal;color:#333;">----</div>
<svg class="a" style="left:3451.00px;top:1159.20px;" width="32" height="32" viewBox="0 0 32 32"><polyline points="2.8,18.6 11.0,26.6 27.4,6.2" fill="none" stroke="#5cb85c" stroke-width="4.4" stroke-linecap="round" stroke-linejoin="round"/></svg>
<div class="a" style="left:121.40px;top:1198.60px;width:3413.60px;height:42.00px;background:#f9f9f9;"></div>
<div class="a" style="left:121.40px;top:1240.60px;width:3413.60px;height:1.00px;background:#e3e3e3;"></div>
<div class="a" style="left:124.40px;top:1202.20px;width:83.30px;height:35.60px;background:#eee;border:1px solid #d9d9d9;"></div>
<div class="a" style="left:214.00px;top:1202.20px;width:173.60px;height:35.60px;background:#eee;border:1px solid #d9d9d9;"></div>
<div class="a" style="left:394.40px;top:1202.20px;width:334.30px;height:35.60px;background:#eee;border:1px solid #d9d9d9;"></div>
<div class="a" style="left:735.00px;top:1202.20px;width:1236.50px;height:35.60px;background:#eee;border:1px solid #d9d9d9;"></div>
<div class="a" style="left:1978.40px;top:1202.20px;width:98.20px;height:35.60px;background:#eee;border:1px solid #d9d9d9;"></div>
<div class="a" style="left:2083.00px;top:1202.20px;width:143.60px;height:35.60px;background:#eee;border:1px solid #d9d9d9;"></div>
<div class="a" style="left:124.40px;top:1202.20px;width:24.20px;height:35.60px;background:#9c27b0;"></div>
<div class="a t" style="left:130.40px;top:1210.68px;font-size:19.4px;line-height:19.4px;font-weight:bold;color:#fff;">4</div>
<div class="a t" style="left:153.00px;top:1212.13px;font-size:16.5px;line-height:16.5px;font-weight:bold;color:#444;">40052</div>
<div class="a t" style="left:215.00px;top:1212.13px;font-size:16.5px;line-height:16.5px;font-weight:bold;color:#444;">256 Bit (16 Words)</div>
<svg class="a" style="left:368.20px;top:1217.50px;" width="10.600000000000001" height="7.4" viewBox="0 0 10.600000000000001 7.4"><polyline points="0.8,1.2000000000000002 4.800000000000001,5.2 8.8,1.2000000000000002" fill="none" stroke="#444" stroke-width="1.2800000000000002"/></svg>
<div class="a t" style="left:399.40px;top:1212.13px;font-size:16.5px;line-height:16.5px;font-weight:bold;color:#444;">SN</div>
<div class="a t" style="left:741.00px;top:1212.13px;font-size:16.5px;line-height:16.5px;font-weight:normal;color:#555;">Smart Meter Seriennummer</div>
<div class="a t" style="left:1979.60px;top:1213.13px;font-size:16.5px;line-height:16.5px;font-weight:bold;color:#444;">R (03)</div>
<svg class="a" style="left:2057.20px;top:1217.50px;" width="10.600000000000001" height="7.4" viewBox="0 0 10.600000000000001 7.4"><polyline points="0.8,1.2000000000000002 4.800000000000001,5.2 8.8,1.2000000000000002" fill="none" stroke="#444" stroke-width="1.2800000000000002"/></svg>
<div class="a t" style="left:2089.00px;top:1210.63px;font-size:16.5px;line-height:16.5px;font-weight:normal;color:#555;">TEXT</div>
<div class="a" style="left:2233.50px;top:1202.20px;width:143.00px;height:35.60px;background:#d2d2d2;"></div>
<svg class="a" style="left:2241.50px;top:1215.20px;" width="20" height="7" viewBox="0 0 20 7"><circle cx="3" cy="3.5" r="2.25" fill="#444"/><circle cx="9.2" cy="3.5" r="2.25" fill="#444"/><circle cx="15.4" cy="3.5" r="2.25" fill="#444"/></svg>
<div class="a" style="left:2383.70px;top:1202.20px;width:778.90px;height:35.60px;background:#eee;border:1px solid #d4d4d4;"></div>
<div class="a" style="left:2616.00px;top:1205.20px;width:1.00px;height:29.60px;background:#d6d6d6;"></div>
<div class="a" style="left:2889.30px;top:1205.20px;width:1.00px;height:29.60px;background:#d6d6d6;"></div>
<div class="a" style="left:3036.20px;top:1205.20px;width:1.00px;height:29.60px;background:#d6d6d6;"></div>
<div class="a t" style="left:2439.80px;width:120px;text-align:center;top:1212.83px;font-size:16.5px;line-height:16.5px;color:#555;">-</div>
<div class="a t" style="left:2692.60px;width:120px;text-align:center;top:1212.83px;font-size:16.5px;line-height:16.5px;color:#555;">-</div>
<div class="a t" style="left:2902.70px;width:120px;text-align:center;top:1212.83px;font-size:16.5px;line-height:16.5px;color:#555;">str</div>
<div class="a t" style="left:3039.40px;width:120px;text-align:center;top:1212.83px;font-size:16.5px;line-height:16.5px;color:#555;">-</div>
<svg class="a" style="left:3203.00px;top:1211.20px;" width="34" height="20" viewBox="0 0 34 20"><line x1="3.6" y1="9.9" x2="27" y2="9.9" stroke="#5cb85c" stroke-width="3.4" stroke-linecap="round"/><polyline points="20.6,3.1 27.2,9.9 20.6,16.7" fill="none" stroke="#5cb85c" stroke-width="3.4" stroke-linecap="round" stroke-linejoin="round"/></svg>
<div class="a" style="left:3238.00px;top:1202.20px;width:142.00px;height:35.60px;background:#d2d2d2;"></div>
<svg class="a" style="left:3246.00px;top:1215.20px;" width="20" height="7" viewBox="0 0 20 7"><circle cx="3" cy="3.5" r="2.25" fill="#444"/><circle cx="9.2" cy="3.5" r="2.25" fill="#444"/><circle cx="15.4" cy="3.5" r="2.25" fill="#444"/></svg>
<div class="a" style="left:3387.00px;top:1202.20px;width:53.60px;height:35.60px;background:#eee;border:1px solid #d9d9d9;"></div>
<div class="a t" style="left:3392.00px;top:1210.63px;font-size:16.5px;line-height:16.5px;font-weight:normal;color:#333;">----</div>
<svg class="a" style="left:3451.00px;top:1202.20px;" width="32" height="32" viewBox="0 0 32 32"><polyline points="2.8,18.6 11.0,26.6 27.4,6.2" fill="none" stroke="#5cb85c" stroke-width="4.4" stroke-linecap="round" stroke-linejoin="round"/></svg>
<div class="a" style="left:121.40px;top:1283.60px;width:3413.60px;height:1.00px;background:#e3e3e3;"></div>
<div class="a" style="left:124.40px;top:1245.20px;width:83.30px;height:35.60px;background:#eee;border:1px solid #d9d9d9;"></div>
<div class="a" style="left:214.00px;top:1245.20px;width:173.60px;height:35.60px;background:#eee;border:1px solid #d9d9d9;"></div>
<div class="a" style="left:394.40px;top:1245.20px;width:334.30px;height:35.60px;background:#eee;border:1px solid #d9d9d9;"></div>
<div class="a" style="left:735.00px;top:1245.20px;width:1236.50px;height:35.60px;background:#eee;border:1px solid #d9d9d9;"></div>
<div class="a" style="left:1978.40px;top:1245.20px;width:98.20px;height:35.60px;background:#eee;border:1px solid #d9d9d9;"></div>
<div class="a" style="left:2083.00px;top:1245.20px;width:143.60px;height:35.60px;background:#eee;border:1px solid #d9d9d9;"></div>
<div class="a" style="left:124.40px;top:1245.20px;width:24.20px;height:35.60px;background:#9c27b0;"></div>
<div class="a t" style="left:130.40px;top:1253.68px;font-size:19.4px;line-height:19.4px;font-weight:bold;color:#fff;">4</div>
<div class="a t" style="left:153.00px;top:1255.13px;font-size:16.5px;line-height:16.5px;font-weight:bold;color:#444;">40068</div>
<div class="a t" style="left:215.00px;top:1255.13px;font-size:16.5px;line-height:16.5px;font-weight:bold;color:#444;">16 Bit (1 Word)</div>
<svg class="a" style="left:368.20px;top:1260.50px;" width="10.600000000000001" height="7.4" viewBox="0 0 10.600000000000001 7.4"><polyline points="0.8,1.2000000000000002 4.800000000000001,5.2 8.8,1.2000000000000002" fill="none" stroke="#444" stroke-width="1.2800000000000002"/></svg>
<div class="a t" style="left:399.40px;top:1255.13px;font-size:16.5px;line-height:16.5px;font-weight:bold;color:#444;">DA</div>
<div class="a t" style="left:741.00px;top:1255.13px;font-size:16.5px;line-height:16.5px;font-weight:normal;color:#555;">Modbus Device Address</div>
<div class="a t" style="left:1979.60px;top:1256.13px;font-size:16.5px;line-height:16.5px;font-weight:bold;color:#444;">R (03)</div>
<svg class="a" style="left:2057.20px;top:1260.50px;" width="10.600000000000001" height="7.4" viewBox="0 0 10.600000000000001 7.4"><polyline points="0.8,1.2000000000000002 4.800000000000001,5.2 8.8,1.2000000000000002" fill="none" stroke="#444" stroke-width="1.2800000000000002"/></svg>
<div class="a t" style="left:2089.00px;top:1253.63px;font-size:16.5px;line-height:16.5px;font-weight:normal;color:#555;">UINT</div>
<div class="a" style="left:2233.50px;top:1245.20px;width:143.00px;height:35.60px;background:#419b36;box-shadow:0 0 7px 1px rgba(92,184,92,0.75);"></div>
<div class="a" style="left:2363.00px;top:1245.20px;width:13.50px;height:4.50px;background:#5cb85c;"></div>
<div class="a t" style="left:2240.50px;top:1254.13px;font-size:16.5px;line-height:16.5px;font-weight:normal;color:#f4fbe9;">200</div>
<div class="a" style="left:2383.70px;top:1245.20px;width:778.90px;height:35.60px;background:#eee;border:1px solid #d4d4d4;"></div>
<div class="a" style="left:2616.00px;top:1248.20px;width:1.00px;height:29.60px;background:#d6d6d6;"></div>
<div class="a" style="left:2889.30px;top:1248.20px;width:1.00px;height:29.60px;background:#d6d6d6;"></div>
<div class="a" style="left:3036.20px;top:1248.20px;width:1.00px;height:29.60px;background:#d6d6d6;"></div>
<div class="a t" style="left:2439.80px;width:120px;text-align:center;top:1255.83px;font-size:16.5px;line-height:16.5px;color:#555;">-</div>
<div class="a t" style="left:2692.60px;width:120px;text-align:center;top:1255.83px;font-size:16.5px;line-height:16.5px;color:#555;">-</div>
<div class="a t" style="left:2902.70px;width:120px;text-align:center;top:1255.83px;font-size:16.5px;line-height:16.5px;color:#555;">int</div>
<div class="a t" style="left:3039.40px;width:120px;text-align:center;top:1255.83px;font-size:16.5px;line-height:16.5px;color:#555;">-</div>
<svg class="a" style="left:3203.00px;top:1254.20px;" width="34" height="20" viewBox="0 0 34 20"><line x1="3.6" y1="9.9" x2="27" y2="9.9" stroke="#5cb85c" stroke-width="3.4" stroke-linecap="round"/><polyline points="20.6,3.1 27.2,9.9 20.6,16.7" fill="none" stroke="#5cb85c" stroke-width="3.4" stroke-linecap="round" stroke-linejoin="round"/></svg>
<div class="a" style="left:3238.00px;top:1245.20px;width:142.00px;height:35.60px;background:#419b36;box-shadow:0 0 7px 1px rgba(92,184,92,0.75);"></div>
<div class="a" style="left:3366.50px;top:1245.20px;width:13.50px;height:4.50px;background:#5cb85c;"></div>
<div class="a t" style="left:3243.70px;top:1254.13px;font-size:16.5px;line-height:16.5px;font-weight:normal;color:#f4fbe9;">200</div>
<div class="a" style="left:3387.00px;top:1245.20px;width:53.60px;height:35.60px;background:#eee;border:1px solid #d9d9d9;"></div>
<div class="a t" style="left:3392.00px;top:1253.63px;font-size:16.5px;line-height:16.5px;font-weight:normal;color:#333;">----</div>
<svg class="a" style="left:3451.00px;top:1245.20px;" width="32" height="32" viewBox="0 0 32 32"><polyline points="2.8,18.6 11.0,26.6 27.4,6.2" fill="none" stroke="#5cb85c" stroke-width="4.4" stroke-linecap="round" stroke-linejoin="round"/></svg>
<div class="a" style="left:121.40px;top:1284.60px;width:3413.60px;height:42.00px;background:#f9f9f9;"></div>
<div class="a" style="left:121.40px;top:1326.60px;width:3413.60px;height:1.00px;background:#e3e3e3;"></div>
<div class="a" style="left:124.40px;top:1288.20px;width:83.30px;height:35.60px;background:#eee;border:1px solid #d9d9d9;"></div>
<div class="a" style="left:214.00px;top:1288.20px;width:173.60px;height:35.60px;background:#eee;border:1px solid #d9d9d9;"></div>
<div class="a" style="left:394.40px;top:1288.20px;width:334.30px;height:35.60px;background:#eee;border:1px solid #d9d9d9;"></div>
<div class="a" style="left:735.00px;top:1288.20px;width:1236.50px;height:35.60px;background:#eee;border:1px solid #d9d9d9;"></div>
<div class="a" style="left:1978.40px;top:1288.20px;width:98.20px;height:35.60px;background:#eee;border:1px solid #d9d9d9;"></div>
<div class="a" style="left:2083.00px;top:1288.20px;width:143.60px;height:35.60px;background:#eee;border:1px solid #d9d9d9;"></div>
<div class="a" style="left:124.40px;top:1288.20px;width:24.20px;height:35.60px;background:#9c27b0;"></div>
<div class="a t" style="left:130.40px;top:1296.68px;font-size:19.4px;line-height:19.4px;font-weight:bold;color:#fff;">4</div>
<div class="a t" style="left:153.00px;top:1298.13px;font-size:16.5px;line-height:16.5px;font-weight:bold;color:#444;">40069</div>
<div class="a t" style="left:215.00px;top:1298.13px;font-size:16.5px;line-height:16.5px;font-weight:bold;color:#444;">16 Bit (1 Word)</div>
<svg class="a" style="left:368.20px;top:1303.50px;" width="10.600000000000001" height="7.4" viewBox="0 0 10.600000000000001 7.4"><polyline points="0.8,1.2000000000000002 4.800000000000001,5.2 8.8,1.2000000000000002" fill="none" stroke="#444" stroke-width="1.2800000000000002"/></svg>
<div class="a t" style="left:399.40px;top:1298.13px;font-size:16.5px;line-height:16.5px;font-weight:bold;color:#444;">ID - SM Type</div>
<div class="a t" style="left:741.00px;top:1298.13px;font-size:16.5px;line-height:16.5px;font-weight:normal;color:#555;">211: Single Phase (AN or AB), 212: Split Single Phase (ABN), 213: WYE-Connect Three Phase (ABCN), 214: Delta-Connect Three Phase (ABC)</div>
<div class="a t" style="left:1979.60px;top:1299.13px;font-size:16.5px;line-height:16.5px;font-weight:bold;color:#444;">R (03)</div>
<svg class="a" style="left:2057.20px;top:1303.50px;" width="10.600000000000001" height="7.4" viewBox="0 0 10.600000000000001 7.4"><polyline points="0.8,1.2000000000000002 4.800000000000001,5.2 8.8,1.2000000000000002" fill="none" stroke="#444" stroke-width="1.2800000000000002"/></svg>
<div class="a t" style="left:2089.00px;top:1296.63px;font-size:16.5px;line-height:16.5px;font-weight:normal;color:#555;">UINT</div>
<div class="a" style="left:2233.50px;top:1288.20px;width:143.00px;height:35.60px;background:#d2d2d2;"></div>
<svg class="a" style="left:2241.50px;top:1301.20px;" width="20" height="7" viewBox="0 0 20 7"><circle cx="3" cy="3.5" r="2.25" fill="#444"/><circle cx="9.2" cy="3.5" r="2.25" fill="#444"/><circle cx="15.4" cy="3.5" r="2.25" fill="#444"/></svg>
<div class="a" style="left:2383.70px;top:1288.20px;width:778.90px;height:35.60px;background:#eee;border:1px solid #d4d4d4;"></div>
<div class="a" style="left:2616.00px;top:1291.20px;width:1.00px;height:29.60px;background:#d6d6d6;"></div>
<div class="a" style="left:2889.30px;top:1291.20px;width:1.00px;height:29.60px;background:#d6d6d6;"></div>
<div class="a" style="left:3036.20px;top:1291.20px;width:1.00px;height:29.60px;background:#d6d6d6;"></div>
<div class="a t" style="left:2439.80px;width:120px;text-align:center;top:1298.83px;font-size:16.5px;line-height:16.5px;color:#555;">-</div>
<div class="a t" style="left:2692.60px;width:120px;text-align:center;top:1298.83px;font-size:16.5px;line-height:16.5px;color:#555;">-</div>
<div class="a t" style="left:2902.70px;width:120px;text-align:center;top:1298.83px;font-size:16.5px;line-height:16.5px;color:#555;">int</div>
<div class="a t" style="left:3039.40px;width:120px;text-align:center;top:1298.83px;font-size:16.5px;line-height:16.5px;color:#555;">-</div>
<svg class="a" style="left:3203.00px;top:1297.20px;" width="34" height="20" viewBox="0 0 34 20"><line x1="3.6" y1="9.9" x2="27" y2="9.9" stroke="#5cb85c" stroke-width="3.4" stroke-linecap="round"/><polyline points="20.6,3.1 27.2,9.9 20.6,16.7" fill="none" stroke="#5cb85c" stroke-width="3.4" stroke-linecap="round" stroke-linejoin="round"/></svg>
<div class="a" style="left:3238.00px;top:1288.20px;width:142.00px;height:35.60px;background:#d2d2d2;"></div>
<svg class="a" style="left:3246.00px;top:1301.20px;" width="20" height="7" viewBox="0 0 20 7"><circle cx="3" cy="3.5" r="2.25" fill="#444"/><circle cx="9.2" cy="3.5" r="2.25" fill="#444"/><circle cx="15.4" cy="3.5" r="2.25" fill="#444"/></svg>
<div class="a" style="left:3387.00px;top:1288.20px;width:53.60px;height:35.60px;background:#eee;border:1px solid #d9d9d9;"></div>
<div class="a t" style="left:3392.00px;top:1296.63px;font-size:16.5px;line-height:16.5px;font-weight:normal;color:#333;">----</div>
<svg class="a" style="left:3451.00px;top:1288.20px;" width="32" height="32" viewBox="0 0 32 32"><polyline points="2.8,18.6 11.0,26.6 27.4,6.2" fill="none" stroke="#5cb85c" stroke-width="4.4" stroke-linecap="round" stroke-linejoin="round"/></svg>
<div class="a" style="left:121.40px;top:1369.60px;width:3413.60px;height:1.00px;background:#e3e3e3;"></div>
<div class="a" style="left:124.40px;top:1331.20px;width:83.30px;height:35.60px;background:#eee;border:1px solid #d9d9d9;"></div>
<div class="a" style="left:214.00px;top:1331.20px;width:173.60px;height:35.60px;background:#eee;border:1px solid #d9d9d9;"></div>
<div class="a" style="left:394.40px;top:1331.20px;width:334.30px;height:35.60px;background:#eee;border:1px solid #d9d9d9;"></div>
<div class="a" style="left:735.00px;top:1331.20px;width:1236.50px;height:35.60px;background:#eee;border:1px solid #d9d9d9;"></div>
<div class="a" style="left:1978.40px;top:1331.20px;width:98.20px;height:35.60px;background:#eee;border:1px solid #d9d9d9;"></div>
<div class="a" style="left:2083.00px;top:1331.20px;width:143.60px;height:35.60px;background:#eee;border:1px solid #d9d9d9;"></div>
<div class="a" style="left:124.40px;top:1331.20px;width:24.20px;height:35.60px;background:#9c27b0;"></div>
<div class="a t" style="left:130.40px;top:1339.68px;font-size:19.4px;line-height:19.4px;font-weight:bold;color:#fff;">4</div>
<div class="a t" style="left:153.00px;top:1341.13px;font-size:16.5px;line-height:16.5px;font-weight:bold;color:#444;">40070</div>
<div class="a t" style="left:215.00px;top:1341.13px;font-size:16.5px;line-height:16.5px;font-weight:bold;color:#444;">16 Bit (1 Word)</div>
<svg class="a" style="left:368.20px;top:1346.50px;" width="10.600000000000001" height="7.4" viewBox="0 0 10.600000000000001 7.4"><polyline points="0.8,1.2000000000000002 4.800000000000001,5.2 8.8,1.2000000000000002" fill="none" stroke="#444" stroke-width="1.2800000000000002"/></svg>
<div class="a t" style="left:399.40px;top:1341.13px;font-size:16.5px;line-height:16.5px;font-weight:bold;color:#444;">L 1</div>
<div class="a t" style="left:741.00px;top:1341.13px;font-size:16.5px;line-height:16.5px;font-weight:normal;color:#555;">Length of sunspec model ac_meter (21x)</div>
<div class="a t" style="left:1979.60px;top:1342.13px;font-size:16.5px;line-height:16.5px;font-weight:bold;color:#444;">R (03)</div>
<svg class="a" style="left:2057.20px;top:1346.50px;" width="10.600000000000001" height="7.4" viewBox="0 0 10.600000000000001 7.4"><polyline points="0.8,1.2000000000000002 4.800000000000001,5.2 8.8,1.2000000000000002" fill="none" stroke="#444" stroke-width="1.2800000000000002"/></svg>
<div class="a t" style="left:2089.00px;top:1339.63px;font-size:16.5px;line-height:16.5px;font-weight:normal;color:#555;">UINT</div>
<div class="a" style="left:2233.50px;top:1331.20px;width:143.00px;height:35.60px;background:#5cb85c;"></div>
<div class="a t" style="left:2240.50px;top:1340.13px;font-size:16.5px;line-height:16.5px;font-weight:normal;color:#f4fbe9;">124</div>
<div class="a" style="left:2383.70px;top:1331.20px;width:778.90px;height:35.60px;background:#eee;border:1px solid #d4d4d4;"></div>
<div class="a" style="left:2616.00px;top:1334.20px;width:1.00px;height:29.60px;background:#d6d6d6;"></div>
<div class="a" style="left:2889.30px;top:1334.20px;width:1.00px;height:29.60px;background:#d6d6d6;"></div>
<div class="a" style="left:3036.20px;top:1334.20px;width:1.00px;height:29.60px;background:#d6d6d6;"></div>
<div class="a t" style="left:2439.80px;width:120px;text-align:center;top:1341.83px;font-size:16.5px;line-height:16.5px;color:#555;">-</div>
<div class="a t" style="left:2692.60px;width:120px;text-align:center;top:1341.83px;font-size:16.5px;line-height:16.5px;color:#555;">-</div>
<div class="a t" style="left:2902.70px;width:120px;text-align:center;top:1341.83px;font-size:16.5px;line-height:16.5px;color:#555;">int</div>
<div class="a t" style="left:3039.40px;width:120px;text-align:center;top:1341.83px;font-size:16.5px;line-height:16.5px;color:#555;">-</div>
<svg class="a" style="left:3203.00px;top:1340.20px;" width="34" height="20" viewBox="0 0 34 20"><line x1="3.6" y1="9.9" x2="27" y2="9.9" stroke="#5cb85c" stroke-width="3.4" stroke-linecap="round"/><polyline points="20.6,3.1 27.2,9.9 20.6,16.7" fill="none" stroke="#5cb85c" stroke-width="3.4" stroke-linecap="round" stroke-linejoin="round"/></svg>
<div class="a" style="left:3238.00px;top:1331.20px;width:142.00px;height:35.60px;background:#5cb85c;"></div>
<div class="a t" style="left:3243.70px;top:1340.13px;font-size:16.5px;line-height:16.5px;font-weight:normal;color:#f4fbe9;">124</div>
<div class="a" style="left:3387.00px;top:1331.20px;width:53.60px;height:35.60px;background:#eee;border:1px solid #d9d9d9;"></div>
<div class="a t" style="left:3392.00px;top:1339.63px;font-size:16.5px;line-height:16.5px;font-weight:normal;color:#333;">----</div>
<svg class="a" style="left:3451.00px;top:1331.20px;" width="32" height="32" viewBox="0 0 32 32"><polyline points="2.8,18.6 11.0,26.6 27.4,6.2" fill="none" stroke="#5cb85c" stroke-width="4.4" stroke-linecap="round" stroke-linejoin="round"/></svg>
<div class="a" style="left:121.40px;top:1370.60px;width:3413.60px;height:42.00px;background:#f9f9f9;"></div>
<div class="a" style="left:121.40px;top:1412.60px;width:3413.60px;height:1.00px;background:#e3e3e3;"></div>
<div class="a" style="left:124.40px;top:1374.20px;width:83.30px;height:35.60px;background:#eee;border:1px solid #d9d9d9;"></div>
<div class="a" style="left:214.00px;top:1374.20px;width:173.60px;height:35.60px;background:#eee;border:1px solid #d9d9d9;"></div>
<div class="a" style="left:394.40px;top:1374.20px;width:334.30px;height:35.60px;background:#eee;border:1px solid #d9d9d9;"></div>
<div class="a" style="left:735.00px;top:1374.20px;width:1236.50px;height:35.60px;background:#eee;border:1px solid #d9d9d9;"></div>
<div class="a" style="left:1978.40px;top:1374.20px;width:98.20px;height:35.60px;background:#eee;border:1px solid #d9d9d9;"></div>
<div class="a" style="left:2083.00px;top:1374.20px;width:143.60px;height:35.60px;background:#eee;border:1px solid #d9d9d9;"></div>
<div class="a" style="left:124.40px;top:1374.20px;width:24.20px;height:35.60px;background:#9c27b0;"></div>
<div class="a t" style="left:130.40px;top:1382.68px;font-size:19.4px;line-height:19.4px;font-weight:bold;color:#fff;">4</div>
<div class="a t" style="left:153.00px;top:1384.13px;font-size:16.5px;line-height:16.5px;font-weight:bold;color:#444;">40071</div>
<div class="a t" style="left:215.00px;top:1384.13px;font-size:16.5px;line-height:16.5px;font-weight:bold;color:#444;">32 Bit (2 Words)</div>
<svg class="a" style="left:368.20px;top:1389.50px;" width="10.600000000000001" height="7.4" viewBox="0 0 10.600000000000001 7.4"><polyline points="0.8,1.2000000000000002 4.800000000000001,5.2 8.8,1.2000000000000002" fill="none" stroke="#444" stroke-width="1.2800000000000002"/></svg>
<div class="a t" style="left:399.40px;top:1384.13px;font-size:16.5px;line-height:16.5px;font-weight:bold;color:#444;">A</div>
<div class="a t" style="left:741.00px;top:1384.13px;font-size:16.5px;line-height:16.5px;font-weight:normal;color:#555;">Total AC Current (Strom L1+L2+L3))</div>
<div class="a t" style="left:1979.60px;top:1385.13px;font-size:16.5px;line-height:16.5px;font-weight:bold;color:#444;">R (03)</div>
<svg class="a" style="left:2057.20px;top:1389.50px;" width="10.600000000000001" height="7.4" viewBox="0 0 10.600000000000001 7.4"><polyline points="0.8,1.2000000000000002 4.800000000000001,5.2 8.8,1.2000000000000002" fill="none" stroke="#444" stroke-width="1.2800000000000002"/></svg>
<div class="a t" style="left:2089.00px;top:1382.63px;font-size:16.5px;line-height:16.5px;font-weight:normal;color:#555;">FLOAT</div>
<div class="a" style="left:2233.50px;top:1374.20px;width:143.00px;height:35.60px;background:#5cb85c;"></div>
<div class="a t" style="left:2240.50px;top:1383.13px;font-size:16.5px;line-height:16.5px;font-weight:normal;color:#f4fbe9;">-0,176</div>
<div class="a" style="left:2383.70px;top:1374.20px;width:778.90px;height:35.60px;background:#eee;border:1px solid #d4d4d4;"></div>
<div class="a" style="left:2616.00px;top:1377.20px;width:1.00px;height:29.60px;background:#d6d6d6;"></div>
<div class="a" style="left:2889.30px;top:1377.20px;width:1.00px;height:29.60px;background:#d6d6d6;"></div>
<div class="a" style="left:3036.20px;top:1377.20px;width:1.00px;height:29.60px;background:#d6d6d6;"></div>
<div class="a t" style="left:2439.80px;width:120px;text-align:center;top:1384.83px;font-size:16.5px;line-height:16.5px;color:#555;">-</div>
<div class="a t" style="left:2692.60px;width:120px;text-align:center;top:1384.83px;font-size:16.5px;line-height:16.5px;color:#555;">-</div>
<div class="a t" style="left:2902.70px;width:120px;text-align:center;top:1384.83px;font-size:16.5px;line-height:16.5px;color:#555;">float</div>
<div class="a t" style="left:3039.40px;width:120px;text-align:center;top:1384.83px;font-size:16.5px;line-height:16.5px;color:#555;">A</div>
<svg class="a" style="left:3203.00px;top:1383.20px;" width="34" height="20" viewBox="0 0 34 20"><line x1="3.6" y1="9.9" x2="27" y2="9.9" stroke="#5cb85c" stroke-width="3.4" stroke-linecap="round"/><polyline points="20.6,3.1 27.2,9.9 20.6,16.7" fill="none" stroke="#5cb85c" stroke-width="3.4" stroke-linecap="round" stroke-linejoin="round"/></svg>
<div class="a" style="left:3238.00px;top:1374.20px;width:142.00px;height:35.60px;background:#5cb85c;"></div>
<div class="a t" style="left:3243.70px;top:1383.13px;font-size:16.5px;line-height:16.5px;font-weight:normal;color:#f4fbe9;">-0,176 A</div>
<div class="a" style="left:3387.00px;top:1374.20px;width:53.60px;height:35.60px;background:#eee;border:1px solid #d9d9d9;"></div>
<div class="a t" style="left:3392.00px;top:1382.63px;font-size:16.5px;line-height:16.5px;font-weight:normal;color:#333;">----</div>
<svg class="a" style="left:3451.00px;top:1374.20px;" width="32" height="32" viewBox="0 0 32 32"><polyline points="2.8,18.6 11.0,26.6 27.4,6.2" fill="none" stroke="#5cb85c" stroke-width="4.4" stroke-linecap="round" stroke-linejoin="round"/></svg>
<div class="a" style="left:121.40px;top:1455.60px;width:3413.60px;height:1.00px;background:#e3e3e3;"></div>
<div class="a" style="left:124.40px;top:1417.20px;width:83.30px;height:35.60px;background:#eee;border:1px solid #d9d9d9;"></div>
<div class="a" style="left:214.00px;top:1417.20px;width:173.60px;height:35.60px;background:#eee;border:1px solid #d9d9d9;"></div>
<div class="a" style="left:394.40px;top:1417.20px;width:334.30px;height:35.60px;background:#eee;border:1px solid #d9d9d9;"></div>
<div class="a" style="left:735.00px;top:1417.20px;width:1236.50px;height:35.60px;background:#eee;border:1px solid #d9d9d9;"></div>
<div class="a" style="left:1978.40px;top:1417.20px;width:98.20px;height:35.60px;background:#eee;border:1px solid #d9d9d9;"></div>
<div class="a" style="left:2083.00px;top:1417.20px;width:143.60px;height:35.60px;background:#eee;border:1px solid #d9d9d9;"></div>
<div class="a" style="left:124.40px;top:1417.20px;width:24.20px;height:35.60px;background:#9c27b0;"></div>
<div class="a t" style="left:130.40px;top:1425.68px;font-size:19.4px;line-height:19.4px;font-weight:bold;color:#fff;">4</div>
<div class="a t" style="left:153.00px;top:1427.13px;font-size:16.5px;line-height:16.5px;font-weight:bold;color:#444;">40073</div>
<div class="a t" style="left:215.00px;top:1427.13px;font-size:16.5px;line-height:16.5px;font-weight:bold;color:#444;">32 Bit (2 Words)</div>
<svg class="a" style="left:368.20px;top:1432.50px;" width="10.600000000000001" height="7.4" viewBox="0 0 10.600000000000001 7.4"><polyline points="0.8,1.2000000000000002 4.800000000000001,5.2 8.8,1.2000000000000002" fill="none" stroke="#444" stroke-width="1.2800000000000002"/></svg>
<div class="a t" style="left:399.40px;top:1427.13px;font-size:16.5px;line-height:16.5px;font-weight:bold;color:#444;">AphA</div>
<div class="a t" style="left:741.00px;top:1427.13px;font-size:16.5px;line-height:16.5px;font-weight:normal;color:#555;">Phase A Current (Strom L1)</div>
<div class="a t" style="left:1979.60px;top:1428.13px;font-size:16.5px;line-height:16.5px;font-weight:bold;color:#444;">R (03)</div>
<svg class="a" style="left:2057.20px;top:1432.50px;" width="10.600000000000001" height="7.4" viewBox="0 0 10.600000000000001 7.4"><polyline points="0.8,1.2000000000000002 4.800000000000001,5.2 8.8,1.2000000000000002" fill="none" stroke="#444" stroke-width="1.2800000000000002"/></svg>
<div class="a t" style="left:2089.00px;top:1425.63px;font-size:16.5px;line-height:16.5px;font-weight:normal;color:#555;">FLOAT</div>
<div class="a" style="left:2233.50px;top:1417.20px;width:143.00px;height:35.60px;background:#5cb85c;"></div>
<div class="a t" style="left:2240.50px;top:1426.13px;font-size:16.5px;line-height:16.5px;font-weight:normal;color:#f4fbe9;">2,275000</div>
<div class="a" style="left:2383.70px;top:1417.20px;width:778.90px;height:35.60px;background:#eee;border:1px solid #d4d4d4;"></div>
<div class="a" style="left:2616.00px;top:1420.20px;width:1.00px;height:29.60px;background:#d6d6d6;"></div>
<div class="a" style="left:2889.30px;top:1420.20px;width:1.00px;height:29.60px;background:#d6d6d6;"></div>
<div class="a" style="left:3036.20px;top:1420.20px;width:1.00px;height:29.60px;background:#d6d6d6;"></div>
<div class="a t" style="left:2439.80px;width:120px;text-align:center;top:1427.83px;font-size:16.5px;line-height:16.5px;color:#555;">-</div>
<div class="a t" style="left:2692.60px;width:120px;text-align:center;top:1427.83px;font-size:16.5px;line-height:16.5px;color:#555;">-</div>
<div class="a t" style="left:2902.70px;width:120px;text-align:center;top:1427.83px;font-size:16.5px;line-height:16.5px;color:#555;">float</div>
<div class="a t" style="left:3039.40px;width:120px;text-align:center;top:1427.83px;font-size:16.5px;line-height:16.5px;color:#555;">A</div>
<svg class="a" style="left:3203.00px;top:1426.20px;" width="34" height="20" viewBox="0 0 34 20"><line x1="3.6" y1="9.9" x2="27" y2="9.9" stroke="#5cb85c" stroke-width="3.4" stroke-linecap="round"/><polyline points="20.6,3.1 27.2,9.9 20.6,16.7" fill="none" stroke="#5cb85c" stroke-width="3.4" stroke-linecap="round" stroke-linejoin="round"/></svg>
<div class="a" style="left:3238.00px;top:1417.20px;width:142.00px;height:35.60px;background:#5cb85c;"></div>
<div class="a t" style="left:3243.70px;top:1426.13px;font-size:16.5px;line-height:16.5px;font-weight:normal;color:#f4fbe9;">2,275000 A</div>
<div class="a" style="left:3387.00px;top:1417.20px;width:53.60px;height:35.60px;background:#eee;border:1px solid #d9d9d9;"></div>
<div class="a t" style="left:3392.00px;top:1425.63px;font-size:16.5px;line-height:16.5px;font-weight:normal;color:#333;">----</div>
<svg class="a" style="left:3451.00px;top:1417.20px;" width="32" height="32" viewBox="0 0 32 32"><polyline points="2.8,18.6 11.0,26.6 27.4,6.2" fill="none" stroke="#5cb85c" stroke-width="4.4" stroke-linecap="round" stroke-linejoin="round"/></svg>
<div class="a" style="left:121.40px;top:1456.60px;width:3413.60px;height:42.00px;background:#f9f9f9;"></div>
<div class="a" style="left:121.40px;top:1498.60px;width:3413.60px;height:1.00px;background:#e3e3e3;"></div>
<div class="a" style="left:124.40px;top:1460.20px;width:83.30px;height:35.60px;background:#eee;border:1px solid #d9d9d9;"></div>
<div class="a" style="left:214.00px;top:1460.20px;width:173.60px;height:35.60px;background:#eee;border:1px solid #d9d9d9;"></div>
<div class="a" style="left:394.40px;top:1460.20px;width:334.30px;height:35.60px;background:#eee;border:1px solid #d9d9d9;"></div>
<div class="a" style="left:735.00px;top:1460.20px;width:1236.50px;height:35.60px;background:#eee;border:1px solid #d9d9d9;"></div>
<div class="a" style="left:1978.40px;top:1460.20px;width:98.20px;height:35.60px;background:#eee;border:1px solid #d9d9d9;"></div>
<div class="a" style="left:2083.00px;top:1460.20px;width:143.60px;height:35.60px;background:#eee;border:1px solid #d9d9d9;"></div>
<div class="a" style="left:124.40px;top:1460.20px;width:24.20px;height:35.60px;background:#9c27b0;"></div>
<div class="a t" style="left:130.40px;top:1468.68px;font-size:19.4px;line-height:19.4px;font-weight:bold;color:#fff;">4</div>
<div class="a t" style="left:153.00px;top:1470.13px;font-size:16.5px;line-height:16.5px;font-weight:bold;color:#444;">40075</div>
<div class="a t" style="left:215.00px;top:1470.13px;font-size:16.5px;line-height:16.5px;font-weight:bold;color:#444;">32 Bit (2 Words)</div>
<svg class="a" style="left:368.20px;top:1475.50px;" width="10.600000000000001" height="7.4" viewBox="0 0 10.600000000000001 7.4"><polyline points="0.8,1.2000000000000002 4.800000000000001,5.2 8.8,1.2000000000000002" fill="none" stroke="#444" stroke-width="1.2800000000000002"/></svg>
<div class="a t" style="left:399.40px;top:1470.13px;font-size:16.5px;line-height:16.5px;font-weight:bold;color:#444;">AphB</div>
<div class="a t" style="left:741.00px;top:1470.13px;font-size:16.5px;line-height:16.5px;font-weight:normal;color:#555;">Phase B Current (Strom L2)</div>
<div class="a t" style="left:1979.60px;top:1471.13px;font-size:16.5px;line-height:16.5px;font-weight:bold;color:#444;">R (03)</div>
<svg class="a" style="left:2057.20px;top:1475.50px;" width="10.600000000000001" height="7.4" viewBox="0 0 10.600000000000001 7.4"><polyline points="0.8,1.2000000000000002 4.800000000000001,5.2 8.8,1.2000000000000002" fill="none" stroke="#444" stroke-width="1.2800000000000002"/></svg>
<div class="a t" style="left:2089.00px;top:1468.63px;font-size:16.5px;line-height:16.5px;font-weight:normal;color:#555;">FLOAT</div>
<div class="a" style="left:2233.50px;top:1460.20px;width:143.00px;height:35.60px;background:#5cb85c;"></div>
<div class="a t" style="left:2240.50px;top:1469.13px;font-size:16.5px;line-height:16.5px;font-weight:normal;color:#f4fbe9;">-0,834</div>
<div class="a" style="left:2383.70px;top:1460.20px;width:778.90px;height:35.60px;background:#eee;border:1px solid #d4d4d4;"></div>
<div class="a" style="left:2616.00px;top:1463.20px;width:1.00px;height:29.60px;background:#d6d6d6;"></div>
<div class="a" style="left:2889.30px;top:1463.20px;width:1.00px;height:29.60px;background:#d6d6d6;"></div>
<div class="a" style="left:3036.20px;top:1463.20px;width:1.00px;height:29.60px;background:#d6d6d6;"></div>
<div class="a t" style="left:2439.80px;width:120px;text-align:center;top:1470.83px;font-size:16.5px;line-height:16.5px;color:#555;">-</div>
<div class="a t" style="left:2692.60px;width:120px;text-align:center;top:1470.83px;font-size:16.5px;line-height:16.5px;color:#555;">-</div>
<div class="a t" style="left:2902.70px;width:120px;text-align:center;top:1470.83px;font-size:16.5px;line-height:16.5px;color:#555;">float</div>
<div class="a t" style="left:3039.40px;width:120px;text-align:center;top:1470.83px;font-size:16.5px;line-height:16.5px;color:#555;">A</div>
<svg class="a" style="left:3203.00px;top:1469.20px;" width="34" height="20" viewBox="0 0 34 20"><line x1="3.6" y1="9.9" x2="27" y2="9.9" stroke="#5cb85c" stroke-width="3.4" stroke-linecap="round"/><polyline points="20.6,3.1 27.2,9.9 20.6,16.7" fill="none" stroke="#5cb85c" stroke-width="3.4" stroke-linecap="round" stroke-linejoin="round"/></svg>
<div class="a" style="left:3238.00px;top:1460.20px;width:142.00px;height:35.60px;background:#5cb85c;"></div>
<div class="a t" style="left:3243.70px;top:1469.13px;font-size:16.5px;line-height:16.5px;font-weight:normal;color:#f4fbe9;">-0,834 A</div>
<div class="a" style="left:3387.00px;top:1460.20px;width:53.60px;height:35.60px;background:#eee;border:1px solid #d9d9d9;"></div>
<div class="a t" style="left:3392.00px;top:1468.63px;font-size:16.5px;line-height:16.5px;font-weight:normal;color:#333;">----</div>
<svg class="a" style="left:3451.00px;top:1460.20px;" width="32" height="32" viewBox="0 0 32 32"><polyline points="2.8,18.6 11.0,26.6 27.4,6.2" fill="none" stroke="#5cb85c" stroke-width="4.4" stroke-linecap="round" stroke-linejoin="round"/></svg>
<div class="a" style="left:121.40px;top:1541.60px;width:3413.60px;height:1.00px;background:#e3e3e3;"></div>
<div class="a" style="left:124.40px;top:1503.20px;width:83.30px;height:35.60px;background:#eee;border:1px solid #d9d9d9;"></div>
<div class="a" style="left:214.00px;top:1503.20px;width:173.60px;height:35.60px;background:#eee;border:1px solid #d9d9d9;"></div>
<div class="a" style="left:394.40px;top:1503.20px;width:334.30px;height:35.60px;background:#eee;border:1px solid #d9d9d9;"></div>
<div class="a" style="left:735.00px;top:1503.20px;width:1236.50px;height:35.60px;background:#eee;border:1px solid #d9d9d9;"></div>
<div class="a" style="left:1978.40px;top:1503.20px;width:98.20px;height:35.60px;background:#eee;border:1px solid #d9d9d9;"></div>
<div class="a" style="left:2083.00px;top:1503.20px;width:143.60px;height:35.60px;background:#eee;border:1px solid #d9d9d9;"></div>
<div class="a" style="left:124.40px;top:1503.20px;width:24.20px;height:35.60px;background:#9c27b0;"></div>
<div class="a t" style="left:130.40px;top:1511.68px;font-size:19.4px;line-height:19.4px;font-weight:bold;color:#fff;">4</div>
<div class="a t" style="left:153.00px;top:1513.13px;font-size:16.5px;line-height:16.5px;font-weight:bold;color:#444;">40077</div>
<div class="a t" style="left:215.00px;top:1513.13px;font-size:16.5px;line-height:16.5px;font-weight:bold;color:#444;">32 Bit (2 Words)</div>
<svg class="a" style="left:368.20px;top:1518.50px;" width="10.600000000000001" height="7.4" viewBox="0 0 10.600000000000001 7.4"><polyline points="0.8,1.2000000000000002 4.800000000000001,5.2 8.8,1.2000000000000002" fill="none" stroke="#444" stroke-width="1.2800000000000002"/></svg>
<div class="a t" style="left:399.40px;top:1513.13px;font-size:16.5px;line-height:16.5px;font-weight:bold;color:#444;">AphC</div>
<div class="a t" style="left:741.00px;top:1513.13px;font-size:16.5px;line-height:16.5px;font-weight:normal;color:#555;">Phase C Current (Strom L3)</div>
<div class="a t" style="left:1979.60px;top:1514.13px;font-size:16.5px;line-height:16.5px;font-weight:bold;color:#444;">R (03)</div>
<svg class="a" style="left:2057.20px;top:1518.50px;" width="10.600000000000001" height="7.4" viewBox="0 0 10.600000000000001 7.4"><polyline points="0.8,1.2000000000000002 4.800000000000001,5.2 8.8,1.2000000000000002" fill="none" stroke="#444" stroke-width="1.2800000000000002"/></svg>
<div class="a t" style="left:2089.00px;top:1511.63px;font-size:16.5px;line-height:16.5px;font-weight:normal;color:#555;">FLOAT</div>
<div class="a" style="left:2233.50px;top:1503.20px;width:143.00px;height:35.60px;background:#5cb85c;"></div>
<div class="a t" style="left:2240.50px;top:1512.13px;font-size:16.5px;line-height:16.5px;font-weight:normal;color:#f4fbe9;">-1,617</div>
<div class="a" style="left:2383.70px;top:1503.20px;width:778.90px;height:35.60px;background:#eee;border:1px solid #d4d4d4;"></div>
<div class="a" style="left:2616.00px;top:1506.20px;width:1.00px;height:29.60px;background:#d6d6d6;"></div>
<div class="a" style="left:2889.30px;top:1506.20px;width:1.00px;height:29.60px;background:#d6d6d6;"></div>
<div class="a" style="left:3036.20px;top:1506.20px;width:1.00px;height:29.60px;background:#d6d6d6;"></div>
<div class="a t" style="left:2439.80px;width:120px;text-align:center;top:1513.83px;font-size:16.5px;line-height:16.5px;color:#555;">-</div>
<div class="a t" style="left:2692.60px;width:120px;text-align:center;top:1513.83px;font-size:16.5px;line-height:16.5px;color:#555;">-</div>
<div class="a t" style="left:2902.70px;width:120px;text-align:center;top:1513.83px;font-size:16.5px;line-height:16.5px;color:#555;">float</div>
<div class="a t" style="left:3039.40px;width:120px;text-align:center;top:1513.83px;font-size:16.5px;line-height:16.5px;color:#555;">A</div>
<svg class="a" style="left:3203.00px;top:1512.20px;" width="34" height="20" viewBox="0 0 34 20"><line x1="3.6" y1="9.9" x2="27" y2="9.9" stroke="#5cb85c" stroke-width="3.4" stroke-linecap="round"/><polyline points="20.6,3.1 27.2,9.9 20.6,16.7" fill="none" stroke="#5cb85c" stroke-width="3.4" stroke-linecap="round" stroke-linejoin="round"/></svg>
<div class="a" style="left:3238.00px;top:1503.20px;width:142.00px;height:35.60px;background:#5cb85c;"></div>
<div class="a t" style="left:3243.70px;top:1512.13px;font-size:16.5px;line-height:16.5px;font-weight:normal;color:#f4fbe9;">-1,617 A</div>
<div class="a" style="left:3387.00px;top:1503.20px;width:53.60px;height:35.60px;background:#eee;border:1px solid #d9d9d9;"></div>
<div class="a t" style="left:3392.00px;top:1511.63px;font-size:16.5px;line-height:16.5px;font-weight:normal;color:#333;">----</div>
<svg class="a" style="left:3451.00px;top:1503.20px;" width="32" height="32" viewBox="0 0 32 32"><polyline points="2.8,18.6 11.0,26.6 27.4,6.2" fill="none" stroke="#5cb85c" stroke-width="4.4" stroke-linecap="round" stroke-linejoin="round"/></svg>
<div class="a" style="left:121.40px;top:1542.60px;width:3413.60px;height:42.00px;background:#f9f9f9;"></div>
<div class="a" style="left:121.40px;top:1584.60px;width:3413.60px;height:1.00px;background:#e3e3e3;"></div>
<div class="a" style="left:124.40px;top:1546.20px;width:83.30px;height:35.60px;background:#eee;border:1px solid #d9d9d9;"></div>
<div class="a" style="left:214.00px;top:1546.20px;width:173.60px;height:35.60px;background:#eee;border:1px solid #d9d9d9;"></div>
<div class="a" style="left:394.40px;top:1546.20px;width:334.30px;height:35.60px;background:#eee;border:1px solid #d9d9d9;"></div>
<div class="a" style="left:735.00px;top:1546.20px;width:1236.50px;height:35.60px;background:#eee;border:1px solid #d9d9d9;"></div>
<div class="a" style="left:1978.40px;top:1546.20px;width:98.20px;height:35.60px;background:#eee;border:1px solid #d9d9d9;"></div>
<div class="a" style="left:2083.00px;top:1546.20px;width:143.60px;height:35.60px;background:#eee;border:1px solid #d9d9d9;"></div>
<div class="a" style="left:124.40px;top:1546.20px;width:24.20px;height:35.60px;background:#9c27b0;"></div>
<div class="a t" style="left:130.40px;top:1554.68px;font-size:19.4px;line-height:19.4px;font-weight:bold;color:#fff;">4</div>
<div class="a t" style="left:153.00px;top:1556.13px;font-size:16.5px;line-height:16.5px;font-weight:bold;color:#444;">40079</div>
<div class="a t" style="left:215.00px;top:1556.13px;font-size:16.5px;line-height:16.5px;font-weight:bold;color:#444;">32 Bit (2 Words)</div>
<svg class="a" style="left:368.20px;top:1561.50px;" width="10.600000000000001" height="7.4" viewBox="0 0 10.600000000000001 7.4"><polyline points="0.8,1.2000000000000002 4.800000000000001,5.2 8.8,1.2000000000000002" fill="none" stroke="#444" stroke-width="1.2800000000000002"/></svg>
<div class="a t" style="left:399.40px;top:1556.13px;font-size:16.5px;line-height:16.5px;font-weight:bold;color:#444;">PhV</div>
<div class="a t" style="left:741.00px;top:1556.13px;font-size:16.5px;line-height:16.5px;font-weight:normal;color:#555;">Line to Neutral AC Voltage (average of active phases) (Mittlere Spannung zu N)</div>
<div class="a t" style="left:1979.60px;top:1557.13px;font-size:16.5px;line-height:16.5px;font-weight:bold;color:#444;">R (03)</div>
<svg class="a" style="left:2057.20px;top:1561.50px;" width="10.600000000000001" height="7.4" viewBox="0 0 10.600000000000001 7.4"><polyline points="0.8,1.2000000000000002 4.800000000000001,5.2 8.8,1.2000000000000002" fill="none" stroke="#444" stroke-width="1.2800000000000002"/></svg>
<div class="a t" style="left:2089.00px;top:1554.63px;font-size:16.5px;line-height:16.5px;font-weight:normal;color:#555;">FLOAT</div>
<div class="a" style="left:2233.50px;top:1546.20px;width:143.00px;height:35.60px;background:#5cb85c;"></div>
<div class="a t" style="left:2240.50px;top:1555.13px;font-size:16.5px;line-height:16.5px;font-weight:normal;color:#f4fbe9;">234,533</div>
<div class="a" style="left:2383.70px;top:1546.20px;width:778.90px;height:35.60px;background:#eee;border:1px solid #d4d4d4;"></div>
<div class="a" style="left:2616.00px;top:1549.20px;width:1.00px;height:29.60px;background:#d6d6d6;"></div>
<div class="a" style="left:2889.30px;top:1549.20px;width:1.00px;height:29.60px;background:#d6d6d6;"></div>
<div class="a" style="left:3036.20px;top:1549.20px;width:1.00px;height:29.60px;background:#d6d6d6;"></div>
<div class="a t" style="left:2439.80px;width:120px;text-align:center;top:1556.83px;font-size:16.5px;line-height:16.5px;color:#555;">-</div>
<div class="a t" style="left:2692.60px;width:120px;text-align:center;top:1556.83px;font-size:16.5px;line-height:16.5px;color:#555;">-</div>
<div class="a t" style="left:2902.70px;width:120px;text-align:center;top:1556.83px;font-size:16.5px;line-height:16.5px;color:#555;">float</div>
<div class="a t" style="left:3039.40px;width:120px;text-align:center;top:1556.83px;font-size:16.5px;line-height:16.5px;color:#555;">V</div>
<svg class="a" style="left:3203.00px;top:1555.20px;" width="34" height="20" viewBox="0 0 34 20"><line x1="3.6" y1="9.9" x2="27" y2="9.9" stroke="#5cb85c" stroke-width="3.4" stroke-linecap="round"/><polyline points="20.6,3.1 27.2,9.9 20.6,16.7" fill="none" stroke="#5cb85c" stroke-width="3.4" stroke-linecap="round" stroke-linejoin="round"/></svg>
<div class="a" style="left:3238.00px;top:1546.20px;width:142.00px;height:35.60px;background:#5cb85c;"></div>
<div class="a t" style="left:3243.70px;top:1555.13px;font-size:16.5px;line-height:16.5px;font-weight:normal;color:#f4fbe9;">234,533 V</div>
<div class="a" style="left:3387.00px;top:1546.20px;width:53.60px;height:35.60px;background:#eee;border:1px solid #d9d9d9;"></div>
<div class="a t" style="left:3392.00px;top:1554.63px;font-size:16.5px;line-height:16.5px;font-weight:normal;color:#333;">----</div>
<svg class="a" style="left:3451.00px;top:1546.20px;" width="32" height="32" viewBox="0 0 32 32"><polyline points="2.8,18.6 11.0,26.6 27.4,6.2" fill="none" stroke="#5cb85c" stroke-width="4.4" stroke-linecap="round" stroke-linejoin="round"/></svg>
<div class="a" style="left:121.40px;top:1627.60px;width:3413.60px;height:1.00px;background:#e3e3e3;"></div>
<div class="a" style="left:124.40px;top:1589.20px;width:83.30px;height:35.60px;background:#eee;border:1px solid #d9d9d9;"></div>
<div class="a" style="left:214.00px;top:1589.20px;width:173.60px;height:35.60px;background:#eee;border:1px solid #d9d9d9;"></div>
<div class="a" style="left:394.40px;top:1589.20px;width:334.30px;height:35.60px;background:#eee;border:1px solid #d9d9d9;"></div>
<div class="a" style="left:735.00px;top:1589.20px;width:1236.50px;height:35.60px;background:#eee;border:1px solid #d9d9d9;"></div>
<div class="a" style="left:1978.40px;top:1589.20px;width:98.20px;height:35.60px;background:#eee;border:1px solid #d9d9d9;"></div>
<div class="a" style="left:2083.00px;top:1589.20px;width:143.60px;height:35.60px;background:#eee;border:1px solid #d9d9d9;"></div>
<div class="a" style="left:124.40px;top:1589.20px;width:24.20px;height:35.60px;background:#9c27b0;"></div>
<div class="a t" style="left:130.40px;top:1597.68px;font-size:19.4px;line-height:19.4px;font-weight:bold;color:#fff;">4</div>
<div class="a t" style="left:153.00px;top:1599.13px;font-size:16.5px;line-height:16.5px;font-weight:bold;color:#444;">40081</div>
<div class="a t" style="left:215.00px;top:1599.13px;font-size:16.5px;line-height:16.5px;font-weight:bold;color:#444;">32 Bit (2 Words)</div>
<svg class="a" style="left:368.20px;top:1604.50px;" width="10.600000000000001" height="7.4" viewBox="0 0 10.600000000000001 7.4"><polyline points="0.8,1.2000000000000002 4.800000000000001,5.2 8.8,1.2000000000000002" fill="none" stroke="#444" stroke-width="1.2800000000000002"/></svg>
<div class="a t" style="left:399.40px;top:1599.13px;font-size:16.5px;line-height:16.5px;font-weight:bold;color:#444;">PhVphA</div>
<div class="a t" style="left:741.00px;top:1599.13px;font-size:16.5px;line-height:16.5px;font-weight:normal;color:#555;">Phase Voltage AN (Spannung L1 zu Neutral)</div>
<div class="a t" style="left:1979.60px;top:1600.13px;font-size:16.5px;line-height:16.5px;font-weight:bold;color:#444;">R (03)</div>
<svg class="a" style="left:2057.20px;top:1604.50px;" width="10.600000000000001" height="7.4" viewBox="0 0 10.600000000000001 7.4"><polyline points="0.8,1.2000000000000002 4.800000000000001,5.2 8.8,1.2000000000000002" fill="none" stroke="#444" stroke-width="1.2800000000000002"/></svg>
<div class="a t" style="left:2089.00px;top:1597.63px;font-size:16.5px;line-height:16.5px;font-weight:normal;color:#555;">FLOAT</div>
<div class="a" style="left:2233.50px;top:1589.20px;width:143.00px;height:35.60px;background:#5cb85c;"></div>
<div class="a t" style="left:2240.50px;top:1598.13px;font-size:16.5px;line-height:16.5px;font-weight:normal;color:#f4fbe9;">234,5</div>
<div class="a" style="left:2383.70px;top:1589.20px;width:778.90px;height:35.60px;background:#eee;border:1px solid #d4d4d4;"></div>
<div class="a" style="left:2616.00px;top:1592.20px;width:1.00px;height:29.60px;background:#d6d6d6;"></div>
<div class="a" style="left:2889.30px;top:1592.20px;width:1.00px;height:29.60px;background:#d6d6d6;"></div>
<div class="a" style="left:3036.20px;top:1592.20px;width:1.00px;height:29.60px;background:#d6d6d6;"></div>
<div class="a t" style="left:2439.80px;width:120px;text-align:center;top:1599.83px;font-size:16.5px;line-height:16.5px;color:#555;">-</div>
<div class="a t" style="left:2692.60px;width:120px;text-align:center;top:1599.83px;font-size:16.5px;line-height:16.5px;color:#555;">-</div>
<div class="a t" style="left:2902.70px;width:120px;text-align:center;top:1599.83px;font-size:16.5px;line-height:16.5px;color:#555;">float</div>
<div class="a t" style="left:3039.40px;width:120px;text-align:center;top:1599.83px;font-size:16.5px;line-height:16.5px;color:#555;">V</div>
<svg class="a" style="left:3203.00px;top:1598.20px;" width="34" height="20" viewBox="0 0 34 20"><line x1="3.6" y1="9.9" x2="27" y2="9.9" stroke="#5cb85c" stroke-width="3.4" stroke-linecap="round"/><polyline points="20.6,3.1 27.2,9.9 20.6,16.7" fill="none" stroke="#5cb85c" stroke-width="3.4" stroke-linecap="round" stroke-linejoin="round"/></svg>
<div class="a" style="left:3238.00px;top:1589.20px;width:142.00px;height:35.60px;background:#5cb85c;"></div>
<div class="a t" style="left:3243.70px;top:1598.13px;font-size:16.5px;line-height:16.5px;font-weight:normal;color:#f4fbe9;">234,5 V</div>
<div class="a" style="left:3387.00px;top:1589.20px;width:53.60px;height:35.60px;background:#eee;border:1px solid #d9d9d9;"></div>
<div class="a t" style="left:3392.00px;top:1597.63px;font-size:16.5px;line-height:16.5px;font-weight:normal;color:#333;">----</div>
<svg class="a" style="left:3451.00px;top:1589.20px;" width="32" height="32" viewBox="0 0 32 32"><polyline points="2.8,18.6 11.0,26.6 27.4,6.2" fill="none" stroke="#5cb85c" stroke-width="4.4" stroke-linecap="round" stroke-linejoin="round"/></svg>
<div class="a" style="left:121.40px;top:1628.60px;width:3413.60px;height:42.00px;background:#f9f9f9;"></div>
<div class="a" style="left:121.40px;top:1670.60px;width:3413.60px;height:1.00px;background:#e3e3e3;"></div>
<div class="a" style="left:124.40px;top:1632.20px;width:83.30px;height:35.60px;background:#eee;border:1px solid #d9d9d9;"></div>
<div class="a" style="left:214.00px;top:1632.20px;width:173.60px;height:35.60px;background:#eee;border:1px solid #d9d9d9;"></div>
<div class="a" style="left:394.40px;top:1632.20px;width:334.30px;height:35.60px;background:#eee;border:1px solid #d9d9d9;"></div>
<div class="a" style="left:735.00px;top:1632.20px;width:1236.50px;height:35.60px;background:#eee;border:1px solid #d9d9d9;"></div>
<div class="a" style="left:1978.40px;top:1632.20px;width:98.20px;height:35.60px;background:#eee;border:1px solid #d9d9d9;"></div>
<div class="a" style="left:2083.00px;top:1632.20px;width:143.60px;height:35.60px;background:#eee;border:1px solid #d9d9d9;"></div>
<div class="a" style="left:124.40px;top:1632.20px;width:24.20px;height:35.60px;background:#9c27b0;"></div>
<div class="a t" style="left:130.40px;top:1640.68px;font-size:19.4px;line-height:19.4px;font-weight:bold;color:#fff;">4</div>
<div class="a t" style="left:153.00px;top:1642.13px;font-size:16.5px;line-height:16.5px;font-weight:bold;color:#444;">40083</div>
<div class="a t" style="left:215.00px;top:1642.13px;font-size:16.5px;line-height:16.5px;font-weight:bold;color:#444;">32 Bit (2 Words)</div>
<svg class="a" style="left:368.20px;top:1647.50px;" width="10.600000000000001" height="7.4" viewBox="0 0 10.600000000000001 7.4"><polyline points="0.8,1.2000000000000002 4.800000000000001,5.2 8.8,1.2000000000000002" fill="none" stroke="#444" stroke-width="1.2800000000000002"/></svg>
<div class="a t" style="left:399.40px;top:1642.13px;font-size:16.5px;line-height:16.5px;font-weight:bold;color:#444;">PhVphB</div>
<div class="a t" style="left:741.00px;top:1642.13px;font-size:16.5px;line-height:16.5px;font-weight:normal;color:#555;">Phase Voltage BN (Spannung L2 zu Neutral)</div>
<div class="a t" style="left:1979.60px;top:1643.13px;font-size:16.5px;line-height:16.5px;font-weight:bold;color:#444;">R (03)</div>
<svg class="a" style="left:2057.20px;top:1647.50px;" width="10.600000000000001" height="7.4" viewBox="0 0 10.600000000000001 7.4"><polyline points="0.8,1.2000000000000002 4.800000000000001,5.2 8.8,1.2000000000000002" fill="none" stroke="#444" stroke-width="1.2800000000000002"/></svg>
<div class="a t" style="left:2089.00px;top:1640.63px;font-size:16.5px;line-height:16.5px;font-weight:normal;color:#555;">FLOAT</div>
<div class="a" style="left:2233.50px;top:1632.20px;width:143.00px;height:35.60px;background:#5cb85c;"></div>
<div class="a t" style="left:2240.50px;top:1641.13px;font-size:16.5px;line-height:16.5px;font-weight:normal;color:#f4fbe9;">233,5</div>
<div class="a" style="left:2383.70px;top:1632.20px;width:778.90px;height:35.60px;background:#eee;border:1px solid #d4d4d4;"></div>
<div class="a" style="left:2616.00px;top:1635.20px;width:1.00px;height:29.60px;background:#d6d6d6;"></div>
<div class="a" style="left:2889.30px;top:1635.20px;width:1.00px;height:29.60px;background:#d6d6d6;"></div>
<div class="a" style="left:3036.20px;top:1635.20px;width:1.00px;height:29.60px;background:#d6d6d6;"></div>
<div class="a t" style="left:2439.80px;width:120px;text-align:center;top:1642.83px;font-size:16.5px;line-height:16.5px;color:#555;">-</div>
<div class="a t" style="left:2692.60px;width:120px;text-align:center;top:1642.83px;font-size:16.5px;line-height:16.5px;color:#555;">-</div>
<div class="a t" style="left:2902.70px;width:120px;text-align:center;top:1642.83px;font-size:16.5px;line-height:16.5px;color:#555;">float</div>
<div class="a t" style="left:3039.40px;width:120px;text-align:center;top:1642.83px;font-size:16.5px;line-height:16.5px;color:#555;">V</div>
<svg class="a" style="left:3203.00px;top:1641.20px;" width="34" height="20" viewBox="0 0 34 20"><line x1="3.6" y1="9.9" x2="27" y2="9.9" stroke="#5cb85c" stroke-width="3.4" stroke-linecap="round"/><polyline points="20.6,3.1 27.2,9.9 20.6,16.7" fill="none" stroke="#5cb85c" stroke-width="3.4" stroke-linecap="round" stroke-linejoin="round"/></svg>
<div class="a" style="left:3238.00px;top:1632.20px;width:142.00px;height:35.60px;background:#5cb85c;"></div>
<div class="a t" style="left:3243.70px;top:1641.13px;font-size:16.5px;line-height:16.5px;font-weight:normal;color:#f4fbe9;">233,5 V</div>
<div class="a" style="left:3387.00px;top:1632.20px;width:53.60px;height:35.60px;background:#eee;border:1px solid #d9d9d9;"></div>
<div class="a t" style="left:3392.00px;top:1640.63px;font-size:16.5px;line-height:16.5px;font-weight:normal;color:#333;">----</div>
<svg class="a" style="left:3451.00px;top:1632.20px;" width="32" height="32" viewBox="0 0 32 32"><polyline points="2.8,18.6 11.0,26.6 27.4,6.2" fill="none" stroke="#5cb85c" stroke-width="4.4" stroke-linecap="round" stroke-linejoin="round"/></svg>
<div class="a" style="left:121.40px;top:1671.90px;width:3413.60px;height:42.40px;background:#90ee90;"></div>
<div class="a" style="left:121.40px;top:1713.60px;width:3413.60px;height:1.00px;background:#e3e3e3;"></div>
<div class="a" style="left:124.40px;top:1675.20px;width:83.30px;height:35.60px;background:#eee;border:1px solid #d9d9d9;"></div>
<div class="a" style="left:214.00px;top:1675.20px;width:173.60px;height:35.60px;background:#eee;border:1px solid #d9d9d9;"></div>
<div class="a" style="left:394.40px;top:1675.20px;width:334.30px;height:35.60px;background:#eee;border:1px solid #d9d9d9;"></div>
<div class="a" style="left:735.00px;top:1675.20px;width:1236.50px;height:35.60px;background:#eee;border:1px solid #d9d9d9;"></div>
<div class="a" style="left:1978.40px;top:1675.20px;width:98.20px;height:35.60px;background:#eee;border:1px solid #d9d9d9;"></div>
<div class="a" style="left:2083.00px;top:1675.20px;width:143.60px;height:35.60px;background:#eee;border:1px solid #d9d9d9;"></div>
<div class="a" style="left:124.40px;top:1675.20px;width:24.20px;height:35.60px;background:#9c27b0;"></div>
<div class="a t" style="left:130.40px;top:1683.68px;font-size:19.4px;line-height:19.4px;font-weight:bold;color:#fff;">4</div>
<div class="a t" style="left:153.00px;top:1685.13px;font-size:16.5px;line-height:16.5px;font-weight:bold;color:#444;">40085</div>
<div class="a t" style="left:215.00px;top:1685.13px;font-size:16.5px;line-height:16.5px;font-weight:bold;color:#444;">32 Bit (2 Words)</div>
<svg class="a" style="left:368.20px;top:1690.50px;" width="10.600000000000001" height="7.4" viewBox="0 0 10.600000000000001 7.4"><polyline points="0.8,1.2000000000000002 4.800000000000001,5.2 8.8,1.2000000000000002" fill="none" stroke="#444" stroke-width="1.2800000000000002"/></svg>
<div class="a t" style="left:399.40px;top:1685.13px;font-size:16.5px;line-height:16.5px;font-weight:bold;color:#444;">PhVphC</div>
<div class="a t" style="left:741.00px;top:1685.13px;font-size:16.5px;line-height:16.5px;font-weight:normal;color:#555;">Phase Voltage CN (Spannung L3 zu Neutral)</div>
<div class="a t" style="left:1979.60px;top:1686.13px;font-size:16.5px;line-height:16.5px;font-weight:bold;color:#444;">R (03)</div>
<svg class="a" style="left:2057.20px;top:1690.50px;" width="10.600000000000001" height="7.4" viewBox="0 0 10.600000000000001 7.4"><polyline points="0.8,1.2000000000000002 4.800000000000001,5.2 8.8,1.2000000000000002" fill="none" stroke="#444" stroke-width="1.2800000000000002"/></svg>
<div class="a t" style="left:2089.00px;top:1683.63px;font-size:16.5px;line-height:16.5px;font-weight:normal;color:#555;">FLOAT</div>
<div class="a" style="left:2233.50px;top:1675.20px;width:143.00px;height:35.60px;background:#d2d2d2;"></div>
<svg class="a" style="left:2241.50px;top:1688.20px;" width="20" height="7" viewBox="0 0 20 7"><circle cx="3" cy="3.5" r="2.25" fill="#444"/><circle cx="9.2" cy="3.5" r="2.25" fill="#444"/><circle cx="15.4" cy="3.5" r="2.25" fill="#444"/></svg>
<div class="a" style="left:2383.70px;top:1675.20px;width:778.90px;height:35.60px;background:#eee;border:1px solid #d4d4d4;"></div>
<div class="a" style="left:2616.00px;top:1678.20px;width:1.00px;height:29.60px;background:#d6d6d6;"></div>
<div class="a" style="left:2889.30px;top:1678.20px;width:1.00px;height:29.60px;background:#d6d6d6;"></div>
<div class="a" style="left:3036.20px;top:1678.20px;width:1.00px;height:29.60px;background:#d6d6d6;"></div>
<div class="a t" style="left:2439.80px;width:120px;text-align:center;top:1685.83px;font-size:16.5px;line-height:16.5px;color:#555;">-</div>
<div class="a t" style="left:2692.60px;width:120px;text-align:center;top:1685.83px;font-size:16.5px;line-height:16.5px;color:#555;">-</div>
<div class="a t" style="left:2902.70px;width:120px;text-align:center;top:1685.83px;font-size:16.5px;line-height:16.5px;color:#555;">float</div>
<div class="a t" style="left:3039.40px;width:120px;text-align:center;top:1685.83px;font-size:16.5px;line-height:16.5px;color:#555;">V</div>
<svg class="a" style="left:3203.00px;top:1684.20px;" width="34" height="20" viewBox="0 0 34 20"><line x1="3.6" y1="9.9" x2="27" y2="9.9" stroke="#5cb85c" stroke-width="3.4" stroke-linecap="round"/><polyline points="20.6,3.1 27.2,9.9 20.6,16.7" fill="none" stroke="#5cb85c" stroke-width="3.4" stroke-linecap="round" stroke-linejoin="round"/></svg>
<div class="a" style="left:3238.00px;top:1675.20px;width:142.00px;height:35.60px;background:#d2d2d2;"></div>
<svg class="a" style="left:3246.00px;top:1688.20px;" width="20" height="7" viewBox="0 0 20 7"><circle cx="3" cy="3.5" r="2.25" fill="#444"/><circle cx="9.2" cy="3.5" r="2.25" fill="#444"/><circle cx="15.4" cy="3.5" r="2.25" fill="#444"/></svg>
<div class="a" style="left:3387.00px;top:1675.20px;width:53.60px;height:35.60px;background:#eee;border:1px solid #d9d9d9;"></div>
<div class="a t" style="left:3392.00px;top:1683.63px;font-size:16.5px;line-height:16.5px;font-weight:normal;color:#333;">----</div>
<svg class="a" style="left:3451.00px;top:1675.20px;" width="32" height="32" viewBox="0 0 32 32"><polyline points="2.8,18.6 11.0,26.6 27.4,6.2" fill="none" stroke="#5cb85c" stroke-width="4.4" stroke-linecap="round" stroke-linejoin="round"/></svg>
<div class="a" style="left:121.40px;top:1714.60px;width:3413.60px;height:42.00px;background:#f9f9f9;"></div>
<div class="a" style="left:121.40px;top:1756.60px;width:3413.60px;height:1.00px;background:#e3e3e3;"></div>
<div class="a" style="left:124.40px;top:1718.20px;width:83.30px;height:35.60px;background:#eee;border:1px solid #d9d9d9;"></div>
<div class="a" style="left:214.00px;top:1718.20px;width:173.60px;height:35.60px;background:#eee;border:1px solid #d9d9d9;"></div>
<div class="a" style="left:394.40px;top:1718.20px;width:334.30px;height:35.60px;background:#eee;border:1px solid #d9d9d9;"></div>
<div class="a" style="left:735.00px;top:1718.20px;width:1236.50px;height:35.60px;background:#eee;border:1px solid #d9d9d9;"></div>
<div class="a" style="left:1978.40px;top:1718.20px;width:98.20px;height:35.60px;background:#eee;border:1px solid #d9d9d9;"></div>
<div class="a" style="left:2083.00px;top:1718.20px;width:143.60px;height:35.60px;background:#eee;border:1px solid #d9d9d9;"></div>
<div class="a" style="left:124.40px;top:1718.20px;width:24.20px;height:35.60px;background:#9c27b0;"></div>
<div class="a t" style="left:130.40px;top:1726.68px;font-size:19.4px;line-height:19.4px;font-weight:bold;color:#fff;">4</div>
<div class="a t" style="left:153.00px;top:1728.13px;font-size:16.5px;line-height:16.5px;font-weight:bold;color:#444;">40087</div>
<div class="a t" style="left:215.00px;top:1728.13px;font-size:16.5px;line-height:16.5px;font-weight:bold;color:#444;">32 Bit (2 Words)</div>
<svg class="a" style="left:368.20px;top:1733.50px;" width="10.600000000000001" height="7.4" viewBox="0 0 10.600000000000001 7.4"><polyline points="0.8,1.2000000000000002 4.800000000000001,5.2 8.8,1.2000000000000002" fill="none" stroke="#444" stroke-width="1.2800000000000002"/></svg>
<div class="a t" style="left:399.40px;top:1728.13px;font-size:16.5px;line-height:16.5px;font-weight:bold;color:#444;">PPV</div>
<div class="a t" style="left:741.00px;top:1728.13px;font-size:16.5px;line-height:16.5px;font-weight:normal;color:#555;">Line to Line AC Voltage (average of active phases) (Mittlere Spannung L-L)</div>
<div class="a t" style="left:1979.60px;top:1729.13px;font-size:16.5px;line-height:16.5px;font-weight:bold;color:#444;">R (03)</div>
<svg class="a" style="left:2057.20px;top:1733.50px;" width="10.600000000000001" height="7.4" viewBox="0 0 10.600000000000001 7.4"><polyline points="0.8,1.2000000000000002 4.800000000000001,5.2 8.8,1.2000000000000002" fill="none" stroke="#444" stroke-width="1.2800000000000002"/></svg>
<div class="a t" style="left:2089.00px;top:1726.63px;font-size:16.5px;line-height:16.5px;font-weight:normal;color:#555;">FLOAT</div>
<div class="a" style="left:2233.50px;top:1718.20px;width:143.00px;height:35.60px;background:#5cb85c;"></div>
<div class="a t" style="left:2240.50px;top:1727.13px;font-size:16.5px;line-height:16.5px;font-weight:normal;color:#f4fbe9;">406,2</div>
<div class="a" style="left:2383.70px;top:1718.20px;width:778.90px;height:35.60px;background:#eee;border:1px solid #d4d4d4;"></div>
<div class="a" style="left:2616.00px;top:1721.20px;width:1.00px;height:29.60px;background:#d6d6d6;"></div>
<div class="a" style="left:2889.30px;top:1721.20px;width:1.00px;height:29.60px;background:#d6d6d6;"></div>
<div class="a" style="left:3036.20px;top:1721.20px;width:1.00px;height:29.60px;background:#d6d6d6;"></div>
<div class="a t" style="left:2439.80px;width:120px;text-align:center;top:1728.83px;font-size:16.5px;line-height:16.5px;color:#555;">-</div>
<div class="a t" style="left:2692.60px;width:120px;text-align:center;top:1728.83px;font-size:16.5px;line-height:16.5px;color:#555;">-</div>
<div class="a t" style="left:2902.70px;width:120px;text-align:center;top:1728.83px;font-size:16.5px;line-height:16.5px;color:#555;">float</div>
<div class="a t" style="left:3039.40px;width:120px;text-align:center;top:1728.83px;font-size:16.5px;line-height:16.5px;color:#555;">V</div>
<svg class="a" style="left:3203.00px;top:1727.20px;" width="34" height="20" viewBox="0 0 34 20"><line x1="3.6" y1="9.9" x2="27" y2="9.9" stroke="#5cb85c" stroke-width="3.4" stroke-linecap="round"/><polyline points="20.6,3.1 27.2,9.9 20.6,16.7" fill="none" stroke="#5cb85c" stroke-width="3.4" stroke-linecap="round" stroke-linejoin="round"/></svg>
<div class="a" style="left:3238.00px;top:1718.20px;width:142.00px;height:35.60px;background:#5cb85c;"></div>
<div class="a t" style="left:3243.70px;top:1727.13px;font-size:16.5px;line-height:16.5px;font-weight:normal;color:#f4fbe9;">406,2 V</div>
<div class="a" style="left:3387.00px;top:1718.20px;width:53.60px;height:35.60px;background:#eee;border:1px solid #d9d9d9;"></div>
<div class="a t" style="left:3392.00px;top:1726.63px;font-size:16.5px;line-height:16.5px;font-weight:normal;color:#333;">----</div>
<svg class="a" style="left:3451.00px;top:1718.20px;" width="32" height="32" viewBox="0 0 32 32"><polyline points="2.8,18.6 11.0,26.6 27.4,6.2" fill="none" stroke="#5cb85c" stroke-width="4.4" stroke-linecap="round" stroke-linejoin="round"/></svg>
<div class="a" style="left:121.40px;top:1799.60px;width:3413.60px;height:1.00px;background:#e3e3e3;"></div>
<div class="a" style="left:124.40px;top:1761.20px;width:83.30px;height:35.60px;background:#eee;border:1px solid #d9d9d9;"></div>
<div class="a" style="left:214.00px;top:1761.20px;width:173.60px;height:35.60px;background:#eee;border:1px solid #d9d9d9;"></div>
<div class="a" style="left:394.40px;top:1761.20px;width:334.30px;height:35.60px;background:#eee;border:1px solid #d9d9d9;"></div>
<div class="a" style="left:735.00px;top:1761.20px;width:1236.50px;height:35.60px;background:#eee;border:1px solid #d9d9d9;"></div>
<div class="a" style="left:1978.40px;top:1761.20px;width:98.20px;height:35.60px;background:#eee;border:1px solid #d9d9d9;"></div>
<div class="a" style="left:2083.00px;top:1761.20px;width:143.60px;height:35.60px;background:#eee;border:1px solid #d9d9d9;"></div>
<div class="a" style="left:124.40px;top:1761.20px;width:24.20px;height:35.60px;background:#9c27b0;"></div>
<div class="a t" style="left:130.40px;top:1769.68px;font-size:19.4px;line-height:19.4px;font-weight:bold;color:#fff;">4</div>
<div class="a t" style="left:153.00px;top:1771.13px;font-size:16.5px;line-height:16.5px;font-weight:bold;color:#444;">40089</div>
<div class="a t" style="left:215.00px;top:1771.13px;font-size:16.5px;line-height:16.5px;font-weight:bold;color:#444;">32 Bit (2 Words)</div>
<svg class="a" style="left:368.20px;top:1776.50px;" width="10.600000000000001" height="7.4" viewBox="0 0 10.600000000000001 7.4"><polyline points="0.8,1.2000000000000002 4.800000000000001,5.2 8.8,1.2000000000000002" fill="none" stroke="#444" stroke-width="1.2800000000000002"/></svg>
<div class="a t" style="left:399.40px;top:1771.13px;font-size:16.5px;line-height:16.5px;font-weight:bold;color:#444;">PPVphAB</div>
<div class="a t" style="left:741.00px;top:1771.13px;font-size:16.5px;line-height:16.5px;font-weight:normal;color:#555;">Phase Voltage AB (Spannung zwischen L1-L2)</div>
<div class="a t" style="left:1979.60px;top:1772.13px;font-size:16.5px;line-height:16.5px;font-weight:bold;color:#444;">R (03)</div>
<svg class="a" style="left:2057.20px;top:1776.50px;" width="10.600000000000001" height="7.4" viewBox="0 0 10.600000000000001 7.4"><polyline points="0.8,1.2000000000000002 4.800000000000001,5.2 8.8,1.2000000000000002" fill="none" stroke="#444" stroke-width="1.2800000000000002"/></svg>
<div class="a t" style="left:2089.00px;top:1769.63px;font-size:16.5px;line-height:16.5px;font-weight:normal;color:#555;">FLOAT</div>
<div class="a" style="left:2233.50px;top:1761.20px;width:143.00px;height:35.60px;background:#d2d2d2;"></div>
<svg class="a" style="left:2241.50px;top:1774.20px;" width="20" height="7" viewBox="0 0 20 7"><circle cx="3" cy="3.5" r="2.25" fill="#444"/><circle cx="9.2" cy="3.5" r="2.25" fill="#444"/><circle cx="15.4" cy="3.5" r="2.25" fill="#444"/></svg>
<div class="a" style="left:2383.70px;top:1761.20px;width:778.90px;height:35.60px;background:#eee;border:1px solid #d4d4d4;"></div>
<div class="a" style="left:2616.00px;top:1764.20px;width:1.00px;height:29.60px;background:#d6d6d6;"></div>
<div class="a" style="left:2889.30px;top:1764.20px;width:1.00px;height:29.60px;background:#d6d6d6;"></div>
<div class="a" style="left:3036.20px;top:1764.20px;width:1.00px;height:29.60px;background:#d6d6d6;"></div>
<div class="a t" style="left:2439.80px;width:120px;text-align:center;top:1771.83px;font-size:16.5px;line-height:16.5px;color:#555;">-</div>
<div class="a t" style="left:2692.60px;width:120px;text-align:center;top:1771.83px;font-size:16.5px;line-height:16.5px;color:#555;">-</div>
<div class="a t" style="left:2902.70px;width:120px;text-align:center;top:1771.83px;font-size:16.5px;line-height:16.5px;color:#555;">float</div>
<div class="a t" style="left:3039.40px;width:120px;text-align:center;top:1771.83px;font-size:16.5px;line-height:16.5px;color:#555;">V</div>
<svg class="a" style="left:3203.00px;top:1770.20px;" width="34" height="20" viewBox="0 0 34 20"><line x1="3.6" y1="9.9" x2="27" y2="9.9" stroke="#5cb85c" stroke-width="3.4" stroke-linecap="round"/><polyline points="20.6,3.1 27.2,9.9 20.6,16.7" fill="none" stroke="#5cb85c" stroke-width="3.4" stroke-linecap="round" stroke-linejoin="round"/></svg>
<div class="a" style="left:3238.00px;top:1761.20px;width:142.00px;height:35.60px;background:#d2d2d2;"></div>
<svg class="a" style="left:3246.00px;top:1774.20px;" width="20" height="7" viewBox="0 0 20 7"><circle cx="3" cy="3.5" r="2.25" fill="#444"/><circle cx="9.2" cy="3.5" r="2.25" fill="#444"/><circle cx="15.4" cy="3.5" r="2.25" fill="#444"/></svg>
<div class="a" style="left:3387.00px;top:1761.20px;width:53.60px;height:35.60px;background:#eee;border:1px solid #d9d9d9;"></div>
<div class="a t" style="left:3392.00px;top:1769.63px;font-size:16.5px;line-height:16.5px;font-weight:normal;color:#333;">----</div>
<svg class="a" style="left:3451.00px;top:1761.20px;" width="32" height="32" viewBox="0 0 32 32"><polyline points="2.8,18.6 11.0,26.6 27.4,6.2" fill="none" stroke="#5cb85c" stroke-width="4.4" stroke-linecap="round" stroke-linejoin="round"/></svg>
<div class="a" style="left:121.40px;top:1800.60px;width:3413.60px;height:42.00px;background:#f9f9f9;"></div>
<div class="a" style="left:121.40px;top:1842.60px;width:3413.60px;height:1.00px;background:#e3e3e3;"></div>
<div class="a" style="left:124.40px;top:1804.20px;width:83.30px;height:35.60px;background:#eee;border:1px solid #d9d9d9;"></div>
<div class="a" style="left:214.00px;top:1804.20px;width:173.60px;height:35.60px;background:#eee;border:1px solid #d9d9d9;"></div>
<div class="a" style="left:394.40px;top:1804.20px;width:334.30px;height:35.60px;background:#eee;border:1px solid #d9d9d9;"></div>
<div class="a" style="left:735.00px;top:1804.20px;width:1236.50px;height:35.60px;background:#eee;border:1px solid #d9d9d9;"></div>
<div class="a" style="left:1978.40px;top:1804.20px;width:98.20px;height:35.60px;background:#eee;border:1px solid #d9d9d9;"></div>
<div class="a" style="left:2083.00px;top:1804.20px;width:143.60px;height:35.60px;background:#eee;border:1px solid #d9d9d9;"></div>
<div class="a" style="left:124.40px;top:1804.20px;width:24.20px;height:35.60px;background:#9c27b0;"></div>
<div class="a t" style="left:130.40px;top:1812.68px;font-size:19.4px;line-height:19.4px;font-weight:bold;color:#fff;">4</div>
<div class="a t" style="left:153.00px;top:1814.13px;font-size:16.5px;line-height:16.5px;font-weight:bold;color:#444;">40091</div>
<div class="a t" style="left:215.00px;top:1814.13px;font-size:16.5px;line-height:16.5px;font-weight:bold;color:#444;">32 Bit (2 Words)</div>
<svg class="a" style="left:368.20px;top:1819.50px;" width="10.600000000000001" height="7.4" viewBox="0 0 10.600000000000001 7.4"><polyline points="0.8,1.2000000000000002 4.800000000000001,5.2 8.8,1.2000000000000002" fill="none" stroke="#444" stroke-width="1.2800000000000002"/></svg>
<div class="a t" style="left:399.40px;top:1814.13px;font-size:16.5px;line-height:16.5px;font-weight:bold;color:#444;">PPVphBC</div>
<div class="a t" style="left:741.00px;top:1814.13px;font-size:16.5px;line-height:16.5px;font-weight:normal;color:#555;">Phase Voltage BC (Spannung zwischen L2-L3)</div>
<div class="a t" style="left:1979.60px;top:1815.13px;font-size:16.5px;line-height:16.5px;font-weight:bold;color:#444;">R (03)</div>
<svg class="a" style="left:2057.20px;top:1819.50px;" width="10.600000000000001" height="7.4" viewBox="0 0 10.600000000000001 7.4"><polyline points="0.8,1.2000000000000002 4.800000000000001,5.2 8.8,1.2000000000000002" fill="none" stroke="#444" stroke-width="1.2800000000000002"/></svg>
<div class="a t" style="left:2089.00px;top:1812.63px;font-size:16.5px;line-height:16.5px;font-weight:normal;color:#555;">FLOAT</div>
<div class="a" style="left:2233.50px;top:1804.20px;width:143.00px;height:35.60px;background:#5cb85c;"></div>
<div class="a t" style="left:2240.50px;top:1813.13px;font-size:16.5px;line-height:16.5px;font-weight:normal;color:#f4fbe9;">408,2</div>
<div class="a" style="left:2383.70px;top:1804.20px;width:778.90px;height:35.60px;background:#eee;border:1px solid #d4d4d4;"></div>
<div class="a" style="left:2616.00px;top:1807.20px;width:1.00px;height:29.60px;background:#d6d6d6;"></div>
<div class="a" style="left:2889.30px;top:1807.20px;width:1.00px;height:29.60px;background:#d6d6d6;"></div>
<div class="a" style="left:3036.20px;top:1807.20px;width:1.00px;height:29.60px;background:#d6d6d6;"></div>
<div class="a t" style="left:2439.80px;width:120px;text-align:center;top:1814.83px;font-size:16.5px;line-height:16.5px;color:#555;">-</div>
<div class="a t" style="left:2692.60px;width:120px;text-align:center;top:1814.83px;font-size:16.5px;line-height:16.5px;color:#555;">-</div>
<div class="a t" style="left:2902.70px;width:120px;text-align:center;top:1814.83px;font-size:16.5px;line-height:16.5px;color:#555;">float</div>
<div class="a t" style="left:3039.40px;width:120px;text-align:center;top:1814.83px;font-size:16.5px;line-height:16.5px;color:#555;">V</div>
<svg class="a" style="left:3203.00px;top:1813.20px;" width="34" height="20" viewBox="0 0 34 20"><line x1="3.6" y1="9.9" x2="27" y2="9.9" stroke="#5cb85c" stroke-width="3.4" stroke-linecap="round"/><polyline points="20.6,3.1 27.2,9.9 20.6,16.7" fill="none" stroke="#5cb85c" stroke-width="3.4" stroke-linecap="round" stroke-linejoin="round"/></svg>
<div class="a" style="left:3238.00px;top:1804.20px;width:142.00px;height:35.60px;background:#5cb85c;"></div>
<div class="a t" style="left:3243.70px;top:1813.13px;font-size:16.5px;line-height:16.5px;font-weight:normal;color:#f4fbe9;">408,2 V</div>
<div class="a" style="left:3387.00px;top:1804.20px;width:53.60px;height:35.60px;background:#eee;border:1px solid #d9d9d9;"></div>
<div class="a t" style="left:3392.00px;top:1812.63px;font-size:16.5px;line-height:16.5px;font-weight:normal;color:#333;">----</div>
<svg class="a" style="left:3451.00px;top:1804.20px;" width="32" height="32" viewBox="0 0 32 32"><polyline points="2.8,18.6 11.0,26.6 27.4,6.2" fill="none" stroke="#5cb85c" stroke-width="4.4" stroke-linecap="round" stroke-linejoin="round"/></svg>
</body></html>
